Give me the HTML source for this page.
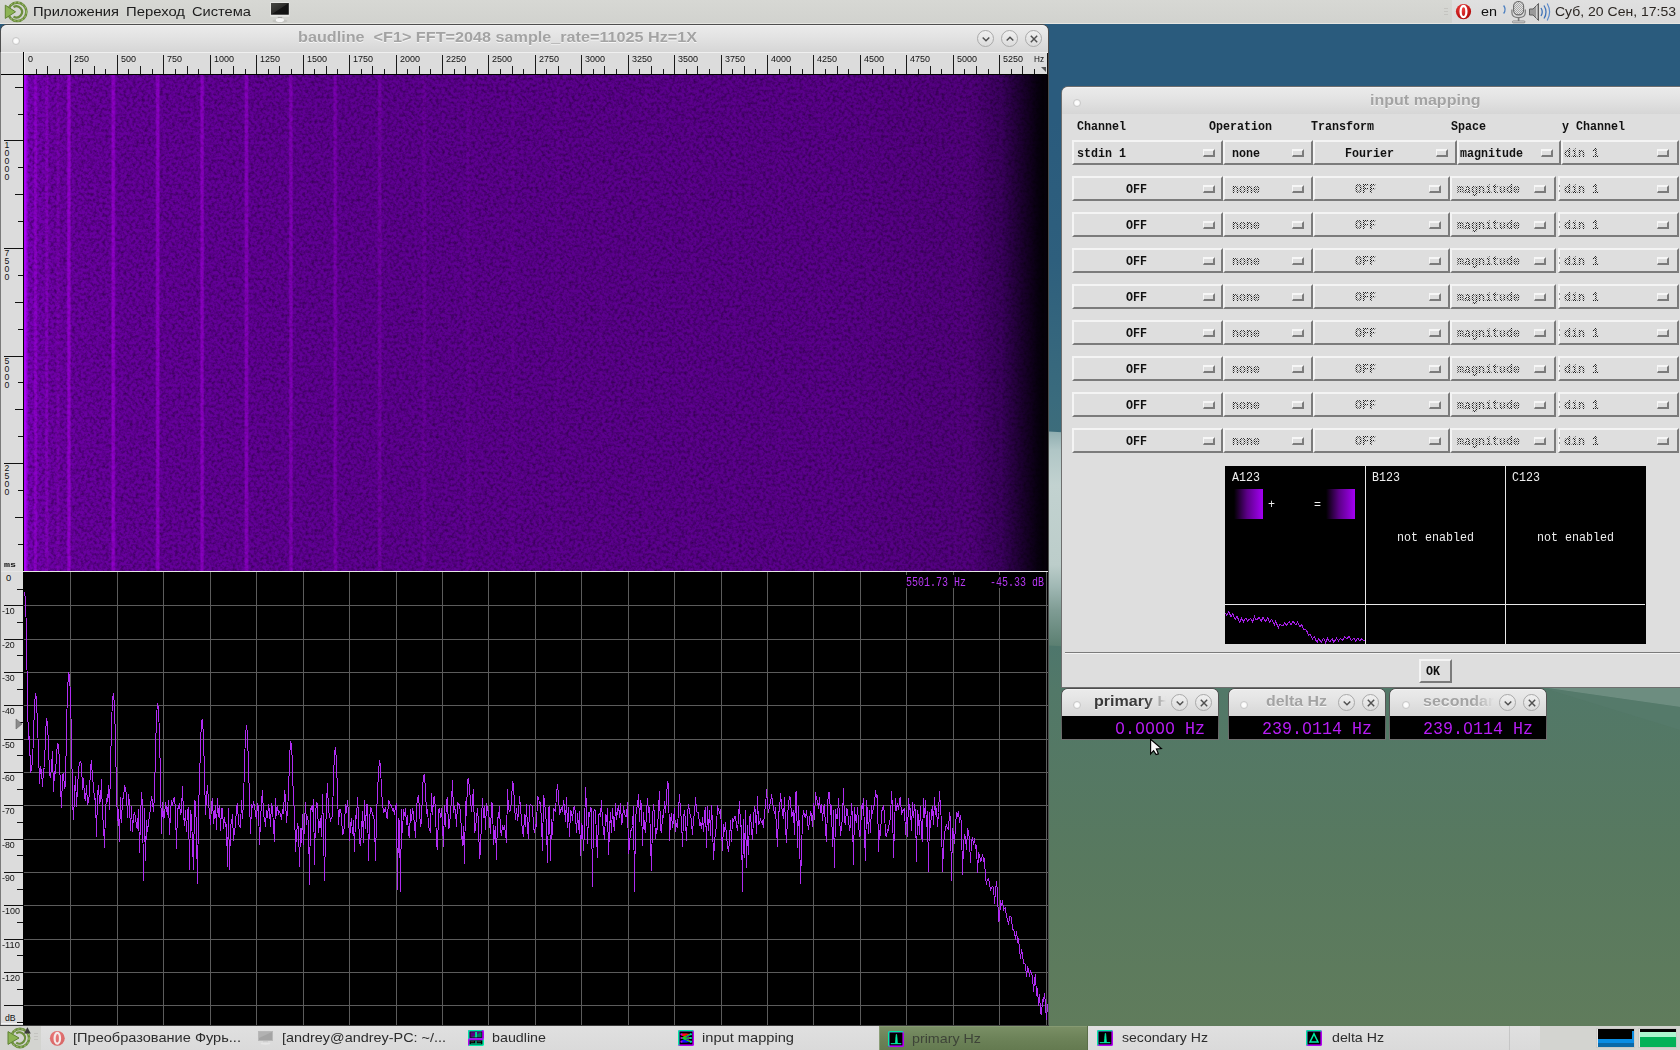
<!DOCTYPE html><html><head><meta charset="utf-8"><title>baudline</title><style>
*{box-sizing:border-box}
html,body{margin:0;padding:0;overflow:hidden}
body{width:1680px;height:1050px;overflow:hidden;position:relative;font-family:"Liberation Sans",sans-serif;font-size:13px;color:#222;
background:linear-gradient(180deg,#2a5b7d 0px,#2a5b7d 120px,#2e5f7d 260px,#3a6b7d 400px,#467374 560px,#527868 690px,#58795f 860px,#607c5c 1026px);}
.a{position:absolute}
.t{position:absolute;white-space:pre;line-height:1}
svg{position:absolute;overflow:visible}
.mono{font-family:"Liberation Mono",monospace}
.panel{background:#d5d6d2}
.tb{background:linear-gradient(180deg,#ebebeb 0%,#e4e4e4 40%,#d6d6d6 100%)}
.ttl{font-weight:700;color:#a3a3a3;text-shadow:0 1px 0 #f6f6f6}
.om{position:absolute;height:25px;background:#dedede;border-style:solid;border-width:2px;border-color:#f4f4f4 #7b7b7b #7b7b7b #f4f4f4}
.ind{position:absolute;width:12px;height:8px;top:7px;background:#dedede;border-style:solid;border-width:2px 2px 2px 1px;border-color:#f6f6f6 #7b7b7b #7b7b7b #f6f6f6}
.ot{position:absolute;top:4px;white-space:pre;font-family:"Liberation Mono",monospace;font-weight:700;font-size:11.67px;line-height:13px;color:#111}
.dis{color:#8e8e8e;font-weight:400}
.hd{position:absolute;white-space:pre;font-family:"Liberation Mono",monospace;font-weight:700;font-size:11.67px;line-height:13px;color:#111}
.cv{position:absolute;white-space:pre;font-family:"Liberation Mono",monospace;font-size:11.67px;line-height:13px;color:#f0f0f0}
.task{position:absolute;top:0;height:24px;white-space:pre;font-size:14px;line-height:24px;color:#2e2e2e;letter-spacing:.25px}
.wbtn{position:absolute;width:17px;height:17px;border-radius:50%;border:1px solid #a9a9a9;background:linear-gradient(180deg,#f0f0f0,#dcdcdc)}
.stp{position:absolute;left:0;top:0;width:1680px;height:700px;-webkit-mask-image:repeating-conic-gradient(#000 0 25%,transparent 0 50%);-webkit-mask-size:2px 2px;mask-image:repeating-conic-gradient(#000 0 25%,transparent 0 50%);mask-size:2px 2px}
.dot{position:absolute;width:8px;height:8px;border-radius:50%;background:radial-gradient(circle at 50% 50%,#fff 0,#fbfbfb 45%,#e4e4e4 100%);border:1px solid #c9c9c9}
</style></head><body>
<svg class="a" style="left:0;top:0" width="1680" height="1050">
<defs><linearGradient id="wb" x1="0" y1="0" x2="0" y2="1">
<stop offset="0" stop-color="#8fadb0"/><stop offset="0.09" stop-color="#b0c6c6"/><stop offset="0.25" stop-color="#c2d2d0"/>
<stop offset="0.62" stop-color="#bccdca"/><stop offset="0.72" stop-color="#a0b8b4"/><stop offset="0.83" stop-color="#7f9c94"/><stop offset="1" stop-color="#5a7e70"/></linearGradient></defs>
<polygon points="1040,431 1075,433 1075,647 1040,645" fill="url(#wb)"/>
<polygon points="1540,687 1680,687 1680,707" fill="#6d8d80"/>
<polygon points="1540,687 1680,707 1680,730 " fill="#587b6d" opacity=".5"/>
</svg>
<div class="a panel" style="left:0;top:0;width:1680px;height:24px;background:linear-gradient(180deg,#d7d8d4,#d1d2ce)"></div>
<div class="a" style="left:1452px;top:0;width:228px;height:24px;background:linear-gradient(180deg,#e0e0e0,#dadada)"></div>
<div class="a" style="left:0;top:23px;width:1680px;height:1px;background:#e6e6e2"></div>
<svg style="left:4px;top:0" width="26" height="24" viewBox="0 0 26 24">
<circle cx="13.2" cy="11.8" r="9.2" fill="none" stroke="#6b8d3c" stroke-width="2.6"/>
<circle cx="13.2" cy="11.8" r="9.2" fill="none" stroke="#a9c77a" stroke-width="1" stroke-dasharray="2 2"/>
<path d="M9.5 7 A5.6 5.6 0 1 1 9.5 16.6" fill="none" stroke="#6b8d3c" stroke-width="2.2"/>
<path d="M1.3 5.2 L11.5 11.8 L1.3 18.4 Z" fill="#8db454" stroke="#5f8233" stroke-width="1"/>
</svg>
<div class="t " style="left:33px;top:4.89px;font-size:13.13px;color:#1c1c1c;transform-origin:0 0;transform:scaleX(1.1197);">Приложения</div>
<div class="t " style="left:126px;top:4.89px;font-size:13.13px;color:#1c1c1c;transform-origin:0 0;transform:scaleX(1.1315);">Переход</div>
<div class="t " style="left:192px;top:4.89px;font-size:13.13px;color:#1c1c1c;transform-origin:0 0;transform:scaleX(1.1159);">Система</div>
<svg style="left:269px;top:0" width="22" height="24" viewBox="0 0 22 24">
<defs><linearGradient id="scr" x1="0" y1="0" x2="1" y2="1"><stop offset="0" stop-color="#484844"/><stop offset=".48" stop-color="#2e2e2c"/><stop offset=".52" stop-color="#141414"/><stop offset="1" stop-color="#101010"/></linearGradient></defs>
<ellipse cx="10.9" cy="21" rx="7.5" ry="1.8" fill="#bdbdb9" opacity=".7"/>
<rect x="1.2" y="1.9" width="19.3" height="14.8" rx=".8" fill="#e6e6e4"/>
<rect x="2" y="3" width="17.8" height="11.7" fill="url(#scr)"/>
<rect x="8.8" y="16.9" width="4.4" height="1.4" fill="#a9a9a7"/>
<ellipse cx="10.9" cy="20" rx="4.1" ry="2.1" fill="#f4f4f4"/>
</svg>
<svg style="left:1455px;top:3px" width="18" height="18" viewBox="0 0 18 18">
<defs><radialGradient id="op" cx=".4" cy=".3" r=".8"><stop offset="0" stop-color="#f04040"/><stop offset="1" stop-color="#a80000"/></radialGradient></defs>
<circle cx="8.5" cy="8.6" r="7.6" fill="url(#op)"/><ellipse cx="8.5" cy="8.6" rx="2.9" ry="5.6" fill="none" stroke="#fff" stroke-width="2.3"/></svg>
<div class="t " style="left:1481px;top:4.89px;font-size:13.13px;color:#111;transform-origin:0 0;transform:scaleX(1.0957);">en</div>
<svg style="left:1502px;top:0" width="26" height="24" viewBox="0 0 26 24">
<defs><pattern id="mp" width="2" height="2" patternUnits="userSpaceOnUse"><rect width="2" height="2" fill="#e2e2e2"/><rect width="1" height="1" fill="#a8a8a8"/><rect x="1" y="1" width="1" height="1" fill="#a8a8a8"/></pattern></defs>
<path d="M1.6 5.5 Q4.6 9.5 1.6 13.5" fill="none" stroke="#4a7ec0" stroke-width="1.3"/>
<rect x="11.6" y="1.5" width="10" height="13.4" rx="4.6" fill="url(#mp)" stroke="#6a6a6a" stroke-width="1.1"/>
<path d="M9.9 9.5 V12.5 Q9.9 17.6 16.6 17.6 Q23.3 17.6 23.3 12.5 V9.5" fill="none" stroke="#7a7a7a" stroke-width="1.2"/>
<path d="M16.6 17.6 V21.4" stroke="#7a7a7a" stroke-width="1.6" fill="none"/><rect x="10.5" y="21" width="12.4" height="1.8" rx=".8" fill="#e8e8e8" stroke="#7a7a7a" stroke-width=".8"/>
</svg>
<svg style="left:1528px;top:1px" width="24" height="22" viewBox="0 0 24 22">
<path d="M1.5 8 H5 L10.5 2.5 V19.5 L5 14 H1.5 Z" fill="#9a9a9a" stroke="#5e5e5e" stroke-width="1"/>
<path d="M8.7 4.5 V17.5" stroke="#dcdcdc" stroke-width="1"/>
<path d="M13 7 Q15.5 11 13 15" fill="none" stroke="#3f72b8" stroke-width="1.3"/>
<path d="M16 4.5 Q20 11 16 17.5" fill="none" stroke="#3f72b8" stroke-width="1.3"/>
<path d="M19.2 2.5 Q24 11 19.2 19.5" fill="none" stroke="#5b8acb" stroke-width="1.2"/>
</svg>
<div class="t " style="left:1555px;top:4.89px;font-size:13.13px;color:#2b2622;transform-origin:0 0;transform:scaleX(1.0667);">Суб, 20 Сен, 17:53</div>
<div class="a" style="left:1444px;top:8px;width:4px;height:1px;background:#c4c4c0;box-shadow:0 3px 0 #c4c4c0,0 6px 0 #c4c4c0"></div>
<div class="a" style="left:0;top:24px;width:1049px;height:1002px;background:#4e4e4e;border-radius:7px 7px 0 0"></div>
<div class="a tb" style="left:1px;top:25px;width:1047px;height:27px;border-radius:6px 6px 0 0;box-shadow:inset 0 1px 0 #f2f2f2"></div>
<div class="dot" style="left:12px;top:37px"></div>
<div class="t " style="left:298px;top:30.14px;font-size:14.25px;font-weight:700;color:#a3a3a3;transform-origin:0 0;transform:scaleX(1.1361);text-shadow:0 1px 0 #f6f6f6;">baudline  &lt;F1&gt; FFT=2048 sample_rate=11025 Hz=1X</div>
<div class="wbtn" style="left:977.0px;top:30.0px"></div><svg style="left:985.5px;top:38.5px" width="1" height="1"><path d="M-3.3 -1.6 L0 1.8 L3.3 -1.6" fill="none" stroke="#505050" stroke-width="1.45"/></svg><div class="wbtn" style="left:1001.0px;top:30.0px"></div><svg style="left:1009.5px;top:38.5px" width="1" height="1"><path d="M-3.3 1.6 L0 -1.8 L3.3 1.6" fill="none" stroke="#505050" stroke-width="1.45"/></svg><div class="wbtn" style="left:1025.0px;top:30.0px"></div><svg style="left:1033.5px;top:38.5px" width="1" height="1"><path d="M-3.2 -3.2 L3.2 3.2 M3.2 -3.2 L-3.2 3.2" fill="none" stroke="#505050" stroke-width="1.45"/></svg>
<div class="a" style="left:0;top:52px;width:1px;height:973px;background:#7a7a7a"></div>
<div class="a" style="left:1px;top:52px;width:1047px;height:23px;background:#dcdcdc"></div>
<div class="a" style="left:1px;top:52px;width:1047px;height:1px;background:#f0f0f0"></div><div class="a" style="left:24px;top:53px;width:1px;height:21px;background:#f0f0f0"></div>
<div class="a" style="left:1px;top:74px;width:1047px;height:1px;background:#000"></div>
<div class="a" style="left:23px;top:52px;width:1px;height:23px;background:#000"></div>
<div class="a" style="left:1047px;top:53px;width:1px;height:22px;background:#111"></div>
<svg style="left:0;top:0" width="1049" height="80" shape-rendering="crispEdges"><rect x="36" y="69" width="1" height="5" fill="#1a1a1a"/><rect x="47" y="66" width="1" height="8" fill="#1a1a1a"/><rect x="59" y="69" width="1" height="5" fill="#1a1a1a"/><rect x="70" y="55" width="1" height="19" fill="#1a1a1a"/><rect x="82" y="69" width="1" height="5" fill="#1a1a1a"/><rect x="94" y="66" width="1" height="8" fill="#1a1a1a"/><rect x="105" y="69" width="1" height="5" fill="#1a1a1a"/><rect x="117" y="55" width="1" height="19" fill="#1a1a1a"/><rect x="128" y="69" width="1" height="5" fill="#1a1a1a"/><rect x="140" y="66" width="1" height="8" fill="#1a1a1a"/><rect x="152" y="69" width="1" height="5" fill="#1a1a1a"/><rect x="163" y="55" width="1" height="19" fill="#1a1a1a"/><rect x="175" y="69" width="1" height="5" fill="#1a1a1a"/><rect x="187" y="66" width="1" height="8" fill="#1a1a1a"/><rect x="198" y="69" width="1" height="5" fill="#1a1a1a"/><rect x="210" y="55" width="1" height="19" fill="#1a1a1a"/><rect x="221" y="69" width="1" height="5" fill="#1a1a1a"/><rect x="233" y="66" width="1" height="8" fill="#1a1a1a"/><rect x="245" y="69" width="1" height="5" fill="#1a1a1a"/><rect x="256" y="55" width="1" height="19" fill="#1a1a1a"/><rect x="268" y="69" width="1" height="5" fill="#1a1a1a"/><rect x="279" y="66" width="1" height="8" fill="#1a1a1a"/><rect x="291" y="69" width="1" height="5" fill="#1a1a1a"/><rect x="303" y="55" width="1" height="19" fill="#1a1a1a"/><rect x="314" y="69" width="1" height="5" fill="#1a1a1a"/><rect x="326" y="66" width="1" height="8" fill="#1a1a1a"/><rect x="337" y="69" width="1" height="5" fill="#1a1a1a"/><rect x="349" y="55" width="1" height="19" fill="#1a1a1a"/><rect x="361" y="69" width="1" height="5" fill="#1a1a1a"/><rect x="372" y="66" width="1" height="8" fill="#1a1a1a"/><rect x="384" y="69" width="1" height="5" fill="#1a1a1a"/><rect x="396" y="55" width="1" height="19" fill="#1a1a1a"/><rect x="407" y="69" width="1" height="5" fill="#1a1a1a"/><rect x="419" y="66" width="1" height="8" fill="#1a1a1a"/><rect x="430" y="69" width="1" height="5" fill="#1a1a1a"/><rect x="442" y="55" width="1" height="19" fill="#1a1a1a"/><rect x="454" y="69" width="1" height="5" fill="#1a1a1a"/><rect x="465" y="66" width="1" height="8" fill="#1a1a1a"/><rect x="477" y="69" width="1" height="5" fill="#1a1a1a"/><rect x="488" y="55" width="1" height="19" fill="#1a1a1a"/><rect x="500" y="69" width="1" height="5" fill="#1a1a1a"/><rect x="512" y="66" width="1" height="8" fill="#1a1a1a"/><rect x="523" y="69" width="1" height="5" fill="#1a1a1a"/><rect x="535" y="55" width="1" height="19" fill="#1a1a1a"/><rect x="546" y="69" width="1" height="5" fill="#1a1a1a"/><rect x="558" y="66" width="1" height="8" fill="#1a1a1a"/><rect x="570" y="69" width="1" height="5" fill="#1a1a1a"/><rect x="581" y="55" width="1" height="19" fill="#1a1a1a"/><rect x="593" y="69" width="1" height="5" fill="#1a1a1a"/><rect x="604" y="66" width="1" height="8" fill="#1a1a1a"/><rect x="616" y="69" width="1" height="5" fill="#1a1a1a"/><rect x="628" y="55" width="1" height="19" fill="#1a1a1a"/><rect x="639" y="69" width="1" height="5" fill="#1a1a1a"/><rect x="651" y="66" width="1" height="8" fill="#1a1a1a"/><rect x="663" y="69" width="1" height="5" fill="#1a1a1a"/><rect x="674" y="55" width="1" height="19" fill="#1a1a1a"/><rect x="686" y="69" width="1" height="5" fill="#1a1a1a"/><rect x="697" y="66" width="1" height="8" fill="#1a1a1a"/><rect x="709" y="69" width="1" height="5" fill="#1a1a1a"/><rect x="721" y="55" width="1" height="19" fill="#1a1a1a"/><rect x="732" y="69" width="1" height="5" fill="#1a1a1a"/><rect x="744" y="66" width="1" height="8" fill="#1a1a1a"/><rect x="755" y="69" width="1" height="5" fill="#1a1a1a"/><rect x="767" y="55" width="1" height="19" fill="#1a1a1a"/><rect x="779" y="69" width="1" height="5" fill="#1a1a1a"/><rect x="790" y="66" width="1" height="8" fill="#1a1a1a"/><rect x="802" y="69" width="1" height="5" fill="#1a1a1a"/><rect x="813" y="55" width="1" height="19" fill="#1a1a1a"/><rect x="825" y="69" width="1" height="5" fill="#1a1a1a"/><rect x="837" y="66" width="1" height="8" fill="#1a1a1a"/><rect x="848" y="69" width="1" height="5" fill="#1a1a1a"/><rect x="860" y="55" width="1" height="19" fill="#1a1a1a"/><rect x="872" y="69" width="1" height="5" fill="#1a1a1a"/><rect x="883" y="66" width="1" height="8" fill="#1a1a1a"/><rect x="895" y="69" width="1" height="5" fill="#1a1a1a"/><rect x="906" y="55" width="1" height="19" fill="#1a1a1a"/><rect x="918" y="69" width="1" height="5" fill="#1a1a1a"/><rect x="930" y="66" width="1" height="8" fill="#1a1a1a"/><rect x="941" y="69" width="1" height="5" fill="#1a1a1a"/><rect x="953" y="55" width="1" height="19" fill="#1a1a1a"/><rect x="964" y="69" width="1" height="5" fill="#1a1a1a"/><rect x="976" y="66" width="1" height="8" fill="#1a1a1a"/><rect x="988" y="69" width="1" height="5" fill="#1a1a1a"/><rect x="999" y="55" width="1" height="19" fill="#1a1a1a"/><rect x="1011" y="69" width="1" height="5" fill="#1a1a1a"/><rect x="1022" y="66" width="1" height="8" fill="#1a1a1a"/><rect x="1034" y="69" width="1" height="5" fill="#1a1a1a"/><path d="M1041 67 L1046 67 L1046 72 Z" fill="#555" shape-rendering="auto"/></svg>
<div class="t " style="left:27.6px;top:55.52px;font-size:8.24px;color:#111;transform-origin:0 0;transform:scaleX(1.0910);">0</div>
<div class="t " style="left:73.6px;top:55.52px;font-size:8.24px;color:#111;transform-origin:0 0;transform:scaleX(1.0910);">250</div>
<div class="t " style="left:120.6px;top:55.52px;font-size:8.24px;color:#111;transform-origin:0 0;transform:scaleX(1.0910);">500</div>
<div class="t " style="left:166.6px;top:55.52px;font-size:8.24px;color:#111;transform-origin:0 0;transform:scaleX(1.0910);">750</div>
<div class="t " style="left:213.6px;top:55.52px;font-size:8.24px;color:#111;transform-origin:0 0;transform:scaleX(1.0910);">1000</div>
<div class="t " style="left:259.6px;top:55.52px;font-size:8.24px;color:#111;transform-origin:0 0;transform:scaleX(1.0910);">1250</div>
<div class="t " style="left:306.6px;top:55.52px;font-size:8.24px;color:#111;transform-origin:0 0;transform:scaleX(1.0910);">1500</div>
<div class="t " style="left:352.6px;top:55.52px;font-size:8.24px;color:#111;transform-origin:0 0;transform:scaleX(1.0910);">1750</div>
<div class="t " style="left:399.6px;top:55.52px;font-size:8.24px;color:#111;transform-origin:0 0;transform:scaleX(1.0910);">2000</div>
<div class="t " style="left:445.6px;top:55.52px;font-size:8.24px;color:#111;transform-origin:0 0;transform:scaleX(1.0910);">2250</div>
<div class="t " style="left:491.6px;top:55.52px;font-size:8.24px;color:#111;transform-origin:0 0;transform:scaleX(1.0910);">2500</div>
<div class="t " style="left:538.6px;top:55.52px;font-size:8.24px;color:#111;transform-origin:0 0;transform:scaleX(1.0910);">2750</div>
<div class="t " style="left:584.6px;top:55.52px;font-size:8.24px;color:#111;transform-origin:0 0;transform:scaleX(1.0910);">3000</div>
<div class="t " style="left:631.6px;top:55.52px;font-size:8.24px;color:#111;transform-origin:0 0;transform:scaleX(1.0910);">3250</div>
<div class="t " style="left:677.6px;top:55.52px;font-size:8.24px;color:#111;transform-origin:0 0;transform:scaleX(1.0910);">3500</div>
<div class="t " style="left:724.6px;top:55.52px;font-size:8.24px;color:#111;transform-origin:0 0;transform:scaleX(1.0910);">3750</div>
<div class="t " style="left:770.6px;top:55.52px;font-size:8.24px;color:#111;transform-origin:0 0;transform:scaleX(1.0910);">4000</div>
<div class="t " style="left:816.6px;top:55.52px;font-size:8.24px;color:#111;transform-origin:0 0;transform:scaleX(1.0910);">4250</div>
<div class="t " style="left:863.6px;top:55.52px;font-size:8.24px;color:#111;transform-origin:0 0;transform:scaleX(1.0910);">4500</div>
<div class="t " style="left:909.6px;top:55.52px;font-size:8.24px;color:#111;transform-origin:0 0;transform:scaleX(1.0910);">4750</div>
<div class="t " style="left:956.6px;top:55.52px;font-size:8.24px;color:#111;transform-origin:0 0;transform:scaleX(1.0910);">5000</div>
<div class="t " style="left:1002.6px;top:55.52px;font-size:8.24px;color:#111;transform-origin:0 0;transform:scaleX(1.0910);">5250</div>
<div class="t " style="left:1034px;top:55.52px;font-size:8.24px;color:#111;transform-origin:0 0;transform:scaleX(0.9930);">Hz</div>
<div class="a" style="left:1px;top:75px;width:22px;height:496px;background:#dcdcdc"></div>
<div class="a" style="left:23px;top:75px;width:1px;height:496px;background:#000"></div>
<svg style="left:0;top:0" width="24" height="1030" shape-rendering="crispEdges"><rect x="15" y="87" width="8" height="1" fill="#111"/><rect x="18" y="114" width="5" height="1" fill="#111"/><rect x="4" y="140" width="19" height="1" fill="#111"/><rect x="18" y="167" width="5" height="1" fill="#111"/><rect x="15" y="194" width="8" height="1" fill="#111"/><rect x="18" y="221" width="5" height="1" fill="#111"/><rect x="4" y="248" width="19" height="1" fill="#111"/><rect x="18" y="275" width="5" height="1" fill="#111"/><rect x="15" y="302" width="8" height="1" fill="#111"/><rect x="18" y="329" width="5" height="1" fill="#111"/><rect x="4" y="356" width="19" height="1" fill="#111"/><rect x="18" y="382" width="5" height="1" fill="#111"/><rect x="15" y="409" width="8" height="1" fill="#111"/><rect x="18" y="436" width="5" height="1" fill="#111"/><rect x="4" y="463" width="19" height="1" fill="#111"/><rect x="18" y="490" width="5" height="1" fill="#111"/><rect x="15" y="517" width="8" height="1" fill="#111"/><rect x="18" y="544" width="5" height="1" fill="#111"/></svg>
<div class="t " style="left:4.5px;top:141.37px;font-size:8.66px;color:#111;transform-origin:0 0;transform:scaleX(1.0000);">1</div>
<div class="t " style="left:4.5px;top:149.37px;font-size:8.66px;color:#111;transform-origin:0 0;transform:scaleX(1.0000);">0</div>
<div class="t " style="left:4.5px;top:157.37px;font-size:8.66px;color:#111;transform-origin:0 0;transform:scaleX(1.0000);">0</div>
<div class="t " style="left:4.5px;top:165.37px;font-size:8.66px;color:#111;transform-origin:0 0;transform:scaleX(1.0000);">0</div>
<div class="t " style="left:4.5px;top:173.37px;font-size:8.66px;color:#111;transform-origin:0 0;transform:scaleX(1.0000);">0</div>
<div class="t " style="left:4.5px;top:249.37px;font-size:8.66px;color:#111;transform-origin:0 0;transform:scaleX(1.0000);">7</div>
<div class="t " style="left:4.5px;top:257.37px;font-size:8.66px;color:#111;transform-origin:0 0;transform:scaleX(1.0000);">5</div>
<div class="t " style="left:4.5px;top:265.37px;font-size:8.66px;color:#111;transform-origin:0 0;transform:scaleX(1.0000);">0</div>
<div class="t " style="left:4.5px;top:273.37px;font-size:8.66px;color:#111;transform-origin:0 0;transform:scaleX(1.0000);">0</div>
<div class="t " style="left:4.5px;top:357.37px;font-size:8.66px;color:#111;transform-origin:0 0;transform:scaleX(1.0000);">5</div>
<div class="t " style="left:4.5px;top:365.37px;font-size:8.66px;color:#111;transform-origin:0 0;transform:scaleX(1.0000);">0</div>
<div class="t " style="left:4.5px;top:373.37px;font-size:8.66px;color:#111;transform-origin:0 0;transform:scaleX(1.0000);">0</div>
<div class="t " style="left:4.5px;top:381.37px;font-size:8.66px;color:#111;transform-origin:0 0;transform:scaleX(1.0000);">0</div>
<div class="t " style="left:4.5px;top:464.37px;font-size:8.66px;color:#111;transform-origin:0 0;transform:scaleX(1.0000);">2</div>
<div class="t " style="left:4.5px;top:472.37px;font-size:8.66px;color:#111;transform-origin:0 0;transform:scaleX(1.0000);">5</div>
<div class="t " style="left:4.5px;top:480.37px;font-size:8.66px;color:#111;transform-origin:0 0;transform:scaleX(1.0000);">0</div>
<div class="t " style="left:4.5px;top:488.37px;font-size:8.66px;color:#111;transform-origin:0 0;transform:scaleX(1.0000);">0</div>
<div class="t mono " style="left:4px;top:562.18px;font-size:7.59px;font-weight:700;color:#111;transform-origin:0 0;transform:scale(1.3180,1.0000);">ms</div>
<svg style="left:24px;top:75px" width="1024" height="496" viewBox="0 0 1024 496"><defs><linearGradient id="sg" x1="0" y1="0" x2="1" y2="0"><stop offset="0" stop-color="#7a00ba"/><stop offset="0.03" stop-color="#6c00a4"/><stop offset="0.1" stop-color="#66009c"/><stop offset="0.3" stop-color="#600094"/><stop offset="0.55" stop-color="#5c008e"/><stop offset="0.8" stop-color="#5a008b"/><stop offset="0.925" stop-color="#52007e"/><stop offset="0.955" stop-color="#3a005e"/><stop offset="0.975" stop-color="#1c0030"/><stop offset="0.99" stop-color="#080010"/><stop offset="1" stop-color="#000"/></linearGradient><linearGradient id="hl" x1="0" y1="0" x2="1" y2="0"><stop offset="0" stop-color="#c000ff" stop-opacity="0"/><stop offset="0.33" stop-color="#c000ff" stop-opacity="1"/><stop offset="0.67" stop-color="#c000ff" stop-opacity="1"/><stop offset="1" stop-color="#c000ff" stop-opacity="0"/></linearGradient><filter id="nz" x="0" y="0" width="100%" height="100%"><feTurbulence type="fractalNoise" baseFrequency="0.33" numOctaves="2" seed="7" result="n"/><feColorMatrix in="n" type="matrix" values="0 0 0 0 0  0 0 0 0 0  0 0 0 0 0  0.85 0 0 0 -0.325"/></filter></defs><rect width="1024" height="496" fill="url(#sg)"/><rect width="1024" height="496" filter="url(#nz)"/><rect x="42.3" y="0" width="5.2" height="496" fill="url(#hl)" opacity="0.440"/><rect x="86.7" y="0" width="5.2" height="496" fill="url(#hl)" opacity="0.420"/><rect x="131.1" y="0" width="5.2" height="496" fill="url(#hl)" opacity="0.400"/><rect x="175.5" y="0" width="5.2" height="496" fill="url(#hl)" opacity="0.380"/><rect x="219.9" y="0" width="5.2" height="496" fill="url(#hl)" opacity="0.350"/><rect x="264.3" y="0" width="5.2" height="496" fill="url(#hl)" opacity="0.300"/><rect x="308.7" y="0" width="5.2" height="496" fill="url(#hl)" opacity="0.250"/><rect x="353.1" y="0" width="5.2" height="496" fill="url(#hl)" opacity="0.180"/><rect x="397.5" y="0" width="5.2" height="496" fill="url(#hl)" opacity="0.100"/><rect x="441.9" y="0" width="5.2" height="496" fill="url(#hl)" opacity="0.060"/><rect x="486.3" y="0" width="5.2" height="496" fill="url(#hl)" opacity="0.045"/><rect x="530.7" y="0" width="5.2" height="496" fill="url(#hl)" opacity="0.035"/><rect x="575.1" y="0" width="5.2" height="496" fill="url(#hl)" opacity="0.020"/><rect x="619.5" y="0" width="5.2" height="496" fill="url(#hl)" opacity="0.020"/><rect x="663.9" y="0" width="5.2" height="496" fill="url(#hl)" opacity="0.020"/><rect x="708.3" y="0" width="5.2" height="496" fill="url(#hl)" opacity="0.020"/><rect x="752.7" y="0" width="5.2" height="496" fill="url(#hl)" opacity="0.020"/><rect x="797.1" y="0" width="5.2" height="496" fill="url(#hl)" opacity="0.020"/><rect x="841.5" y="0" width="5.2" height="496" fill="url(#hl)" opacity="0.020"/><rect x="885.9" y="0" width="5.2" height="496" fill="url(#hl)" opacity="0.020"/><rect x="930.3" y="0" width="5.2" height="496" fill="url(#hl)" opacity="0.020"/><rect x="974.7" y="0" width="5.2" height="496" fill="url(#hl)" opacity="0.020"/><rect x="1019.1" y="0" width="5.2" height="496" fill="url(#hl)" opacity="0.020"/><rect x="9.4" y="0" width="4.4" height="496" fill="url(#hl)" opacity="0.300"/><rect x="20.6" y="0" width="4.4" height="496" fill="url(#hl)" opacity="0.220"/><rect x="31.7" y="0" width="4.4" height="496" fill="url(#hl)" opacity="0.140"/><rect x="0" y="0" width="2.6" height="496" fill="#b000ff" opacity=".9"/><rect x="2.6" y="0" width="1.6" height="496" fill="#b000ff" opacity=".35"/></svg>
<div class="a" style="left:1px;top:571px;width:1047px;height:1px;background:#e6e6e6"></div>
<div class="a" style="left:1px;top:572px;width:22px;height:453px;background:#dcdcdc"></div>
<div class="a" style="left:23px;top:572px;width:1025px;height:453px;background:#000"></div>
<svg style="left:0;top:0" width="1049" height="1026" shape-rendering="crispEdges"><rect x="24" y="605" width="1024" height="1" fill="#5c5c5c"/><rect x="4" y="605" width="19" height="1" fill="#111"/><rect x="17" y="589" width="6" height="1" fill="#111"/><rect x="24" y="639" width="1024" height="1" fill="#5c5c5c"/><rect x="4" y="639" width="19" height="1" fill="#111"/><rect x="17" y="622" width="6" height="1" fill="#111"/><rect x="24" y="672" width="1024" height="1" fill="#5c5c5c"/><rect x="4" y="672" width="19" height="1" fill="#111"/><rect x="17" y="655" width="6" height="1" fill="#111"/><rect x="24" y="705" width="1024" height="1" fill="#5c5c5c"/><rect x="4" y="705" width="19" height="1" fill="#111"/><rect x="17" y="689" width="6" height="1" fill="#111"/><rect x="24" y="739" width="1024" height="1" fill="#5c5c5c"/><rect x="4" y="739" width="19" height="1" fill="#111"/><rect x="17" y="722" width="6" height="1" fill="#111"/><rect x="24" y="772" width="1024" height="1" fill="#5c5c5c"/><rect x="4" y="772" width="19" height="1" fill="#111"/><rect x="17" y="755" width="6" height="1" fill="#111"/><rect x="24" y="805" width="1024" height="1" fill="#5c5c5c"/><rect x="4" y="805" width="19" height="1" fill="#111"/><rect x="17" y="789" width="6" height="1" fill="#111"/><rect x="24" y="839" width="1024" height="1" fill="#5c5c5c"/><rect x="4" y="839" width="19" height="1" fill="#111"/><rect x="17" y="822" width="6" height="1" fill="#111"/><rect x="24" y="872" width="1024" height="1" fill="#5c5c5c"/><rect x="4" y="872" width="19" height="1" fill="#111"/><rect x="17" y="855" width="6" height="1" fill="#111"/><rect x="24" y="905" width="1024" height="1" fill="#5c5c5c"/><rect x="4" y="905" width="19" height="1" fill="#111"/><rect x="17" y="889" width="6" height="1" fill="#111"/><rect x="24" y="939" width="1024" height="1" fill="#5c5c5c"/><rect x="4" y="939" width="19" height="1" fill="#111"/><rect x="17" y="922" width="6" height="1" fill="#111"/><rect x="24" y="972" width="1024" height="1" fill="#5c5c5c"/><rect x="4" y="972" width="19" height="1" fill="#111"/><rect x="17" y="955" width="6" height="1" fill="#111"/><rect x="24" y="1005" width="1024" height="1" fill="#5c5c5c"/><rect x="4" y="1005" width="19" height="1" fill="#111"/><rect x="17" y="989" width="6" height="1" fill="#111"/><rect x="17" y="1022" width="6" height="1" fill="#111"/><rect x="17" y="1022" width="5" height="1" fill="#111"/><rect x="1" y="1023" width="22" height="1" fill="#f2f2f2"/><rect x="70" y="572" width="1" height="453" fill="#5c5c5c"/><rect x="117" y="572" width="1" height="453" fill="#5c5c5c"/><rect x="163" y="572" width="1" height="453" fill="#5c5c5c"/><rect x="210" y="572" width="1" height="453" fill="#5c5c5c"/><rect x="256" y="572" width="1" height="453" fill="#5c5c5c"/><rect x="303" y="572" width="1" height="453" fill="#5c5c5c"/><rect x="349" y="572" width="1" height="453" fill="#5c5c5c"/><rect x="396" y="572" width="1" height="453" fill="#5c5c5c"/><rect x="442" y="572" width="1" height="453" fill="#5c5c5c"/><rect x="488" y="572" width="1" height="453" fill="#5c5c5c"/><rect x="535" y="572" width="1" height="453" fill="#5c5c5c"/><rect x="581" y="572" width="1" height="453" fill="#5c5c5c"/><rect x="628" y="572" width="1" height="453" fill="#5c5c5c"/><rect x="674" y="572" width="1" height="453" fill="#5c5c5c"/><rect x="721" y="572" width="1" height="453" fill="#5c5c5c"/><rect x="767" y="572" width="1" height="453" fill="#5c5c5c"/><rect x="813" y="572" width="1" height="453" fill="#5c5c5c"/><rect x="860" y="572" width="1" height="453" fill="#5c5c5c"/><rect x="906" y="572" width="1" height="453" fill="#5c5c5c"/><rect x="953" y="572" width="1" height="453" fill="#5c5c5c"/><rect x="999" y="572" width="1" height="453" fill="#5c5c5c"/><rect x="1046" y="572" width="1" height="453" fill="#5c5c5c"/><path d="M16 719 L22 724 L16 729 Z" fill="#8a8a8a" stroke="#666" stroke-width=".6" shape-rendering="auto"/></svg>
<div class="t " style="left:6px;top:573.78px;font-size:9.36px;color:#111;transform-origin:0 0;transform:scaleX(1.0000);">0</div>
<div class="t " style="left:2.0px;top:606.78px;font-size:9.36px;color:#111;transform-origin:0 0;transform:scaleX(0.9464);">-10</div>
<div class="t " style="left:2.0px;top:640.78px;font-size:9.36px;color:#111;transform-origin:0 0;transform:scaleX(0.9464);">-20</div>
<div class="t " style="left:2.0px;top:673.78px;font-size:9.36px;color:#111;transform-origin:0 0;transform:scaleX(0.9464);">-30</div>
<div class="t " style="left:2.0px;top:706.78px;font-size:9.36px;color:#111;transform-origin:0 0;transform:scaleX(0.9464);">-40</div>
<div class="t " style="left:2.0px;top:740.78px;font-size:9.36px;color:#111;transform-origin:0 0;transform:scaleX(0.9464);">-50</div>
<div class="t " style="left:2.0px;top:773.78px;font-size:9.36px;color:#111;transform-origin:0 0;transform:scaleX(0.9464);">-60</div>
<div class="t " style="left:2.0px;top:806.78px;font-size:9.36px;color:#111;transform-origin:0 0;transform:scaleX(0.9464);">-70</div>
<div class="t " style="left:2.0px;top:840.78px;font-size:9.36px;color:#111;transform-origin:0 0;transform:scaleX(0.9464);">-80</div>
<div class="t " style="left:2.0px;top:873.78px;font-size:9.36px;color:#111;transform-origin:0 0;transform:scaleX(0.9464);">-90</div>
<div class="t " style="left:2.0px;top:906.78px;font-size:9.36px;color:#111;transform-origin:0 0;transform:scaleX(0.9611);">-100</div>
<div class="t " style="left:2.0px;top:940.78px;font-size:9.36px;color:#111;transform-origin:0 0;transform:scaleX(0.9981);">-110</div>
<div class="t " style="left:2.0px;top:973.78px;font-size:9.36px;color:#111;transform-origin:0 0;transform:scaleX(0.9611);">-120</div>
<div class="t " style="left:5px;top:1013.87px;font-size:8.66px;color:#111;transform-origin:0 0;transform:scaleX(1.0000);">dB</div>
<svg style="left:0;top:0" width="1049" height="1026"><path d="M24.5 592.4 L25.5 600.1 L26.5 633.7 L27.5 703.7 L28.5 739.2 L29.5 737.3 L30.5 772.9 L31.5 768.7 L32.5 761.3 L33.5 736.3 L34.5 705.0 L35.5 692.6 L36.5 699.7 L37.5 726.3 L38.5 750.2 L39.5 783.6 L40.5 766.1 L41.5 771.3 L42.5 786.8 L43.5 769.4 L44.5 767.5 L45.5 733.6 L46.5 718.3 L47.5 722.9 L48.5 746.7 L49.5 772.6 L50.5 778.4 L51.5 766.1 L52.5 751.4 L53.5 791.9 L54.5 770.9 L55.5 774.4 L56.5 755.0 L57.5 743.6 L58.5 744.4 L59.5 763.6 L60.5 785.4 L61.5 807.6 L62.5 776.0 L63.5 772.8 L64.5 788.0 L65.5 786.4 L66.5 728.3 L67.5 690.9 L68.5 673.0 L69.5 675.0 L70.5 697.0 L71.5 738.0 L72.5 798.9 L73.5 820.3 L74.5 794.5 L75.5 775.8 L76.5 806.5 L77.5 788.8 L78.5 769.3 L79.5 763.2 L80.5 761.8 L81.5 763.7 L82.5 790.2 L83.5 777.8 L84.5 797.0 L85.5 801.4 L86.5 785.0 L87.5 804.6 L88.5 801.2 L89.5 793.2 L90.5 768.1 L91.5 760.5 L92.5 778.0 L93.5 785.0 L94.5 800.3 L95.5 797.7 L96.5 837.3 L97.5 794.7 L98.5 784.8 L99.5 804.0 L100.5 800.7 L101.5 779.3 L102.5 817.4 L103.5 822.9 L104.5 848.3 L105.5 810.9 L106.5 798.3 L107.5 802.2 L108.5 785.5 L109.5 809.7 L110.5 768.9 L111.5 724.5 L112.5 698.8 L113.5 692.8 L114.5 706.9 L115.5 740.8 L116.5 792.2 L117.5 820.5 L118.5 809.3 L119.5 842.1 L120.5 797.0 L121.5 823.1 L122.5 798.5 L123.5 798.6 L124.5 785.2 L125.5 789.2 L126.5 794.4 L127.5 817.7 L128.5 794.3 L129.5 803.1 L130.5 831.3 L131.5 806.4 L132.5 831.8 L133.5 815.5 L134.5 813.5 L135.5 816.2 L136.5 827.9 L137.5 828.4 L138.5 809.2 L139.5 852.5 L140.5 818.7 L141.5 792.2 L142.5 805.4 L143.5 880.8 L144.5 808.4 L145.5 861.0 L146.5 820.1 L147.5 832.3 L148.5 821.9 L149.5 817.2 L150.5 806.4 L151.5 796.0 L152.5 801.7 L153.5 811.5 L154.5 794.7 L155.5 750.4 L156.5 716.7 L157.5 702.8 L158.5 708.8 L159.5 734.9 L160.5 780.1 L161.5 834.3 L162.5 801.6 L163.5 819.4 L164.5 816.0 L165.5 802.5 L166.5 808.5 L167.5 814.5 L168.5 799.8 L169.5 835.3 L170.5 811.5 L171.5 800.4 L172.5 806.4 L173.5 798.4 L174.5 797.4 L175.5 810.1 L176.5 849.0 L177.5 808.2 L178.5 808.0 L179.5 803.0 L180.5 814.7 L181.5 811.0 L182.5 786.1 L183.5 814.3 L184.5 826.0 L185.5 809.9 L186.5 831.5 L187.5 810.3 L188.5 807.2 L189.5 869.5 L190.5 810.5 L191.5 818.2 L192.5 843.4 L193.5 870.3 L194.5 800.5 L195.5 801.5 L196.5 831.8 L197.5 883.8 L198.5 806.9 L199.5 783.5 L200.5 743.3 L201.5 721.6 L202.5 719.7 L203.5 737.8 L204.5 774.2 L205.5 814.5 L206.5 796.7 L207.5 785.3 L208.5 802.5 L209.5 813.4 L210.5 825.2 L211.5 804.8 L212.5 797.7 L213.5 823.8 L214.5 814.5 L215.5 804.9 L216.5 830.3 L217.5 797.6 L218.5 816.8 L219.5 804.9 L220.5 830.7 L221.5 809.0 L222.5 808.7 L223.5 828.7 L224.5 817.4 L225.5 825.9 L226.5 824.8 L227.5 867.4 L228.5 808.4 L229.5 869.6 L230.5 824.7 L231.5 823.4 L232.5 814.5 L233.5 841.0 L234.5 829.4 L235.5 826.1 L236.5 806.0 L237.5 803.6 L238.5 823.3 L239.5 826.2 L240.5 827.2 L241.5 800.1 L242.5 818.6 L243.5 802.7 L244.5 763.3 L245.5 734.9 L246.5 725.1 L247.5 735.2 L248.5 765.1 L249.5 799.4 L250.5 833.5 L251.5 805.3 L252.5 806.9 L253.5 802.6 L254.5 804.7 L255.5 815.3 L256.5 819.1 L257.5 804.3 L258.5 806.1 L259.5 845.3 L260.5 819.6 L261.5 803.3 L262.5 789.7 L263.5 815.5 L264.5 817.8 L265.5 826.6 L266.5 810.4 L267.5 817.8 L268.5 804.0 L269.5 812.2 L270.5 826.5 L271.5 802.7 L272.5 809.7 L273.5 824.7 L274.5 842.0 L275.5 798.1 L276.5 816.0 L277.5 806.0 L278.5 814.1 L279.5 812.0 L280.5 814.1 L281.5 820.4 L282.5 808.6 L283.5 813.9 L284.5 790.3 L285.5 797.9 L286.5 822.7 L287.5 809.9 L288.5 793.3 L289.5 759.0 L290.5 741.5 L291.5 743.7 L292.5 765.7 L293.5 805.0 L294.5 807.4 L295.5 851.7 L296.5 833.7 L297.5 824.8 L298.5 827.2 L299.5 867.0 L300.5 827.9 L301.5 843.1 L302.5 814.5 L303.5 845.0 L304.5 824.0 L305.5 802.0 L306.5 824.9 L307.5 815.9 L308.5 823.5 L309.5 885.2 L310.5 809.7 L311.5 807.2 L312.5 811.6 L313.5 798.9 L314.5 864.6 L315.5 814.0 L316.5 802.6 L317.5 804.5 L318.5 833.0 L319.5 823.8 L320.5 817.6 L321.5 837.3 L322.5 793.7 L323.5 831.3 L324.5 880.6 L325.5 836.6 L326.5 802.9 L327.5 782.9 L328.5 812.0 L329.5 814.7 L330.5 820.7 L331.5 818.2 L332.5 816.1 L333.5 778.3 L334.5 753.0 L335.5 747.4 L336.5 761.6 L337.5 793.4 L338.5 825.3 L339.5 809.6 L340.5 809.3 L341.5 817.1 L342.5 834.4 L343.5 833.7 L344.5 824.4 L345.5 804.3 L346.5 813.3 L347.5 799.8 L348.5 813.5 L349.5 841.3 L350.5 825.9 L351.5 818.3 L352.5 833.9 L353.5 820.4 L354.5 851.7 L355.5 814.8 L356.5 819.4 L357.5 796.9 L358.5 816.8 L359.5 840.7 L360.5 846.3 L361.5 830.7 L362.5 811.4 L363.5 842.6 L364.5 800.5 L365.5 828.5 L366.5 805.0 L367.5 804.2 L368.5 860.6 L369.5 820.1 L370.5 808.0 L371.5 808.9 L372.5 815.0 L373.5 815.6 L374.5 822.6 L375.5 861.3 L376.5 816.4 L377.5 792.6 L378.5 771.5 L379.5 760.3 L380.5 766.4 L381.5 790.0 L382.5 803.5 L383.5 812.4 L384.5 810.9 L385.5 807.5 L386.5 816.0 L387.5 819.3 L388.5 799.9 L389.5 802.7 L390.5 805.3 L391.5 805.4 L392.5 810.1 L393.5 808.9 L394.5 815.3 L395.5 805.9 L396.5 804.2 L397.5 890.3 L398.5 817.7 L399.5 822.5 L400.5 891.5 L401.5 809.5 L402.5 832.6 L403.5 808.8 L404.5 816.0 L405.5 808.4 L406.5 824.6 L407.5 815.4 L408.5 834.9 L409.5 837.7 L410.5 808.7 L411.5 821.0 L412.5 807.9 L413.5 815.0 L414.5 824.1 L415.5 837.5 L416.5 806.6 L417.5 799.9 L418.5 795.2 L419.5 810.4 L420.5 826.8 L421.5 822.1 L422.5 788.8 L423.5 776.3 L424.5 774.9 L425.5 790.1 L426.5 814.0 L427.5 808.6 L428.5 825.8 L429.5 829.2 L430.5 832.8 L431.5 793.5 L432.5 815.3 L433.5 799.0 L434.5 795.8 L435.5 810.9 L436.5 843.8 L437.5 849.6 L438.5 810.9 L439.5 808.2 L440.5 817.6 L441.5 808.1 L442.5 825.2 L443.5 846.7 L444.5 805.4 L445.5 826.8 L446.5 799.6 L447.5 798.2 L448.5 828.9 L449.5 826.5 L450.5 811.1 L451.5 801.5 L452.5 780.5 L453.5 813.4 L454.5 806.4 L455.5 810.7 L456.5 827.3 L457.5 802.0 L458.5 804.2 L459.5 804.1 L460.5 814.1 L461.5 831.1 L462.5 845.9 L463.5 826.3 L464.5 863.7 L465.5 801.2 L466.5 815.9 L467.5 779.5 L468.5 778.6 L469.5 789.8 L470.5 800.0 L471.5 812.1 L472.5 799.6 L473.5 789.5 L474.5 832.9 L475.5 828.9 L476.5 817.7 L477.5 808.0 L478.5 823.0 L479.5 859.2 L480.5 850.4 L481.5 818.2 L482.5 798.5 L483.5 817.8 L484.5 805.7 L485.5 829.5 L486.5 803.1 L487.5 808.8 L488.5 812.0 L489.5 822.1 L490.5 834.0 L491.5 802.7 L492.5 803.8 L493.5 844.8 L494.5 833.6 L495.5 826.4 L496.5 859.5 L497.5 818.0 L498.5 817.0 L499.5 806.3 L500.5 830.4 L501.5 835.8 L502.5 825.0 L503.5 828.6 L504.5 826.6 L505.5 832.6 L506.5 842.5 L507.5 789.3 L508.5 809.0 L509.5 811.2 L510.5 809.6 L511.5 799.7 L512.5 782.3 L513.5 784.1 L514.5 805.1 L515.5 820.0 L516.5 807.8 L517.5 820.6 L518.5 813.8 L519.5 795.9 L520.5 808.1 L521.5 820.1 L522.5 831.6 L523.5 836.6 L524.5 814.4 L525.5 826.7 L526.5 803.6 L527.5 829.4 L528.5 839.1 L529.5 805.6 L530.5 804.4 L531.5 806.0 L532.5 806.1 L533.5 827.0 L534.5 832.7 L535.5 824.9 L536.5 827.2 L537.5 796.5 L538.5 797.2 L539.5 803.6 L540.5 802.4 L541.5 822.9 L542.5 851.1 L543.5 795.2 L544.5 801.4 L545.5 812.0 L546.5 826.4 L547.5 863.3 L548.5 809.0 L549.5 805.9 L550.5 861.4 L551.5 818.7 L552.5 834.9 L553.5 808.8 L554.5 809.7 L555.5 811.0 L556.5 794.3 L557.5 784.5 L558.5 795.0 L559.5 814.6 L560.5 811.3 L561.5 806.9 L562.5 812.4 L563.5 800.0 L564.5 807.7 L565.5 822.4 L566.5 797.5 L567.5 827.8 L568.5 807.4 L569.5 837.1 L570.5 810.5 L571.5 812.0 L572.5 820.6 L573.5 807.2 L574.5 806.7 L575.5 813.8 L576.5 833.3 L577.5 813.2 L578.5 830.2 L579.5 811.2 L580.5 856.0 L581.5 822.6 L582.5 828.0 L583.5 850.7 L584.5 829.2 L585.5 787.2 L586.5 807.8 L587.5 844.4 L588.5 812.2 L589.5 817.1 L590.5 806.8 L591.5 809.9 L592.5 886.5 L593.5 812.9 L594.5 809.5 L595.5 811.2 L596.5 837.1 L597.5 857.7 L598.5 814.1 L599.5 813.7 L600.5 815.7 L601.5 800.4 L602.5 822.9 L603.5 828.7 L604.5 840.3 L605.5 813.9 L606.5 821.8 L607.5 807.7 L608.5 855.4 L609.5 830.6 L610.5 812.2 L611.5 832.5 L612.5 807.6 L613.5 823.7 L614.5 830.7 L615.5 803.5 L616.5 819.8 L617.5 810.3 L618.5 805.2 L619.5 817.5 L620.5 803.5 L621.5 824.8 L622.5 820.9 L623.5 805.6 L624.5 813.7 L625.5 816.2 L626.5 816.0 L627.5 802.2 L628.5 854.0 L629.5 846.5 L630.5 830.6 L631.5 830.5 L632.5 825.5 L633.5 806.0 L634.5 892.3 L635.5 819.9 L636.5 809.2 L637.5 805.5 L638.5 794.5 L639.5 821.6 L640.5 799.8 L641.5 805.7 L642.5 846.3 L643.5 812.1 L644.5 826.7 L645.5 832.6 L646.5 812.4 L647.5 798.2 L648.5 813.2 L649.5 806.7 L650.5 839.0 L651.5 871.4 L652.5 818.3 L653.5 803.8 L654.5 815.2 L655.5 839.0 L656.5 828.6 L657.5 829.6 L658.5 809.8 L659.5 791.2 L660.5 829.2 L661.5 833.4 L662.5 814.8 L663.5 818.0 L664.5 801.2 L665.5 812.8 L666.5 798.4 L667.5 780.7 L668.5 785.4 L669.5 841.1 L670.5 820.4 L671.5 813.1 L672.5 827.8 L673.5 819.9 L674.5 807.6 L675.5 832.1 L676.5 823.1 L677.5 828.4 L678.5 809.5 L679.5 794.0 L680.5 811.8 L681.5 819.3 L682.5 846.9 L683.5 817.2 L684.5 810.3 L685.5 821.2 L686.5 840.5 L687.5 813.3 L688.5 804.3 L689.5 812.0 L690.5 815.2 L691.5 821.4 L692.5 835.4 L693.5 817.5 L694.5 814.9 L695.5 797.4 L696.5 810.2 L697.5 813.0 L698.5 812.8 L699.5 825.1 L700.5 822.9 L701.5 829.3 L702.5 817.2 L703.5 832.4 L704.5 813.6 L705.5 806.6 L706.5 847.6 L707.5 805.8 L708.5 831.0 L709.5 810.0 L710.5 835.7 L711.5 804.7 L712.5 824.9 L713.5 859.5 L714.5 844.2 L715.5 831.1 L716.5 827.1 L717.5 805.1 L718.5 810.2 L719.5 812.5 L720.5 808.9 L721.5 829.5 L722.5 851.1 L723.5 823.9 L724.5 832.0 L725.5 822.4 L726.5 836.8 L727.5 844.8 L728.5 852.2 L729.5 840.8 L730.5 820.1 L731.5 841.9 L732.5 818.0 L733.5 820.8 L734.5 816.7 L735.5 816.9 L736.5 825.5 L737.5 830.8 L738.5 818.4 L739.5 800.8 L740.5 826.4 L741.5 825.9 L742.5 892.3 L743.5 819.3 L744.5 857.6 L745.5 810.3 L746.5 868.4 L747.5 824.9 L748.5 854.9 L749.5 817.4 L750.5 814.3 L751.5 829.8 L752.5 839.6 L753.5 818.1 L754.5 806.5 L755.5 812.2 L756.5 834.0 L757.5 796.5 L758.5 824.9 L759.5 822.6 L760.5 819.3 L761.5 822.1 L762.5 820.9 L763.5 828.4 L764.5 809.6 L765.5 808.1 L766.5 789.3 L767.5 804.5 L768.5 812.8 L769.5 805.0 L770.5 803.5 L771.5 794.1 L772.5 801.2 L773.5 808.3 L774.5 814.4 L775.5 807.5 L776.5 830.1 L777.5 846.5 L778.5 812.2 L779.5 810.6 L780.5 793.3 L781.5 803.8 L782.5 813.8 L783.5 818.6 L784.5 797.5 L785.5 826.0 L786.5 843.4 L787.5 815.6 L788.5 804.0 L789.5 797.1 L790.5 798.0 L791.5 816.9 L792.5 814.2 L793.5 810.5 L794.5 834.5 L795.5 793.0 L796.5 791.9 L797.5 847.9 L798.5 806.2 L799.5 833.0 L800.5 884.4 L801.5 848.6 L802.5 820.7 L803.5 810.2 L804.5 816.2 L805.5 817.4 L806.5 810.5 L807.5 820.6 L808.5 830.3 L809.5 820.8 L810.5 812.0 L811.5 814.2 L812.5 827.4 L813.5 803.2 L814.5 819.7 L815.5 792.4 L816.5 799.4 L817.5 800.6 L818.5 808.8 L819.5 797.2 L820.5 813.0 L821.5 804.3 L822.5 821.2 L823.5 807.7 L824.5 803.9 L825.5 829.8 L826.5 842.0 L827.5 806.3 L828.5 792.8 L829.5 792.9 L830.5 814.5 L831.5 805.5 L832.5 847.2 L833.5 810.5 L834.5 868.2 L835.5 809.3 L836.5 818.1 L837.5 818.7 L838.5 798.2 L839.5 816.3 L840.5 835.5 L841.5 826.4 L842.5 818.3 L843.5 788.1 L844.5 821.8 L845.5 824.5 L846.5 807.8 L847.5 810.5 L848.5 820.6 L849.5 829.9 L850.5 828.5 L851.5 803.4 L852.5 818.4 L853.5 865.1 L854.5 806.6 L855.5 819.9 L856.5 822.5 L857.5 807.0 L858.5 823.0 L859.5 836.3 L860.5 834.9 L861.5 805.1 L862.5 808.8 L863.5 798.3 L864.5 834.1 L865.5 860.6 L866.5 800.5 L867.5 812.9 L868.5 834.2 L869.5 810.1 L870.5 833.1 L871.5 805.3 L872.5 814.2 L873.5 806.1 L874.5 804.8 L875.5 790.1 L876.5 798.1 L877.5 795.4 L878.5 851.6 L879.5 829.9 L880.5 835.5 L881.5 812.9 L882.5 808.3 L883.5 806.3 L884.5 813.1 L885.5 833.6 L886.5 837.3 L887.5 829.6 L888.5 830.1 L889.5 820.3 L890.5 819.1 L891.5 790.8 L892.5 807.6 L893.5 858.1 L894.5 825.9 L895.5 798.2 L896.5 810.8 L897.5 802.7 L898.5 810.1 L899.5 799.5 L900.5 797.6 L901.5 815.3 L902.5 810.6 L903.5 810.3 L904.5 807.6 L905.5 835.3 L906.5 810.3 L907.5 836.7 L908.5 798.0 L909.5 809.2 L910.5 808.8 L911.5 830.8 L912.5 802.1 L913.5 818.3 L914.5 804.1 L915.5 814.3 L916.5 862.2 L917.5 810.5 L918.5 816.5 L919.5 834.7 L920.5 805.9 L921.5 835.8 L922.5 841.5 L923.5 797.6 L924.5 817.5 L925.5 800.2 L926.5 827.4 L927.5 811.2 L928.5 871.9 L929.5 811.7 L930.5 827.9 L931.5 812.2 L932.5 806.1 L933.5 824.7 L934.5 797.4 L935.5 814.6 L936.5 807.6 L937.5 826.6 L938.5 812.5 L939.5 791.5 L940.5 808.2 L941.5 822.4 L942.5 872.2 L943.5 846.6 L944.5 834.8 L945.5 827.3 L946.5 825.3 L947.5 827.8 L948.5 830.2 L949.5 812.0 L950.5 819.0 L951.5 881.1 L952.5 827.8 L953.5 834.6 L954.5 843.9 L955.5 825.0 L956.5 813.1 L957.5 815.3 L958.5 810.7 L959.5 823.4 L960.5 814.6 L961.5 825.2 L962.5 875.1 L963.5 845.0 L964.5 834.4 L965.5 838.4 L966.5 850.1 L967.5 828.0 L968.5 832.0 L969.5 840.5 L970.5 863.2 L971.5 840.5 L972.5 836.8 L973.5 844.8 L974.5 837.9 L975.5 848.7 L976.5 845.2 L977.5 873.0 L978.5 853.3 L979.5 855.1 L980.5 861.2 L981.5 860.5 L982.5 854.1 L983.5 860.6 L984.5 859.0 L985.5 878.8 L986.5 882.9 L987.5 879.6 L988.5 878.8 L989.5 882.5 L990.5 891.2 L991.5 887.2 L992.5 886.3 L993.5 887.2 L994.5 903.6 L995.5 890.2 L996.5 881.5 L997.5 891.9 L998.5 921.2 L999.5 920.0 L1000.5 900.2 L1001.5 906.3 L1002.5 900.2 L1003.5 910.3 L1004.5 908.1 L1005.5 908.0 L1006.5 917.4 L1007.5 919.0 L1008.5 924.7 L1009.5 917.0 L1010.5 916.2 L1011.5 917.4 L1012.5 929.4 L1013.5 930.0 L1014.5 931.6 L1015.5 939.6 L1016.5 930.6 L1017.5 941.6 L1018.5 939.4 L1019.5 949.1 L1020.5 959.2 L1021.5 949.0 L1022.5 954.2 L1023.5 963.5 L1024.5 963.1 L1025.5 964.5 L1026.5 976.6 L1027.5 966.9 L1028.5 969.1 L1029.5 977.0 L1030.5 969.9 L1031.5 974.5 L1032.5 976.0 L1033.5 992.0 L1034.5 981.0 L1035.5 973.9 L1036.5 996.4 L1037.5 988.0 L1038.5 1005.6 L1039.5 994.4 L1040.5 1011.8 L1041.5 1015.4 L1042.5 999.3 L1043.5 1002.2 L1044.5 992.9 L1045.5 1004.6 L1046.5 1020.0 L1047.5 1003.8" fill="none" stroke="#b02cf2" stroke-width="1" stroke-linejoin="miter" shape-rendering="crispEdges"/></svg>
<div class="a" style="left:905px;top:575px;width:62px;height:13px;background:#000"></div><div class="a" style="left:989px;top:575px;width:57px;height:13px;background:#000"></div>
<div class="t mono " style="left:905.5px;top:574.73px;font-size:11.61px;color:#b838f4;transform-origin:0 0;transform:scale(0.8614,1.1765);">5501.73 Hz</div>
<div class="t mono " style="left:989.5px;top:574.73px;font-size:11.61px;color:#b838f4;transform-origin:0 0;transform:scale(0.8614,1.1765);">-45.33 dB</div>
<div class="a" style="left:1061px;top:86px;width:619px;height:602px;background:#6e6e6e;border-radius:7px 0 0 0"></div>
<div class="a tb" style="left:1062px;top:87px;width:618px;height:27px;border-radius:6px 0 0 0;box-shadow:inset 0 1px 0 #f2f2f2"></div>
<div class="a" style="left:1062px;top:114px;width:618px;height:573px;background:#dedede"></div>
<div class="dot" style="left:1073px;top:99px"></div>
<div class="t " style="left:1370px;top:92.64px;font-size:14.25px;font-weight:700;color:#a3a3a3;transform-origin:0 0;transform:scaleX(1.1262);text-shadow:0 1px 0 #f6f6f6;">input mapping</div>
<div class="t mono " style="left:1077.3px;top:119.53px;font-size:12.29px;font-weight:700;color:#111;transform-origin:0 0;transform:scale(0.9492,1.1111);">Channel</div>
<div class="t mono " style="left:1208.6px;top:119.53px;font-size:12.29px;font-weight:700;color:#111;transform-origin:0 0;transform:scale(0.9492,1.1111);">Operation</div>
<div class="t mono " style="left:1311px;top:119.53px;font-size:12.29px;font-weight:700;color:#111;transform-origin:0 0;transform:scale(0.9492,1.1111);">Transform</div>
<div class="t mono " style="left:1450.6px;top:119.53px;font-size:12.29px;font-weight:700;color:#111;transform-origin:0 0;transform:scale(0.9492,1.1111);">Space</div>
<div class="t mono " style="left:1562.4px;top:119.53px;font-size:12.29px;font-weight:700;color:#111;transform-origin:0 0;transform:scale(0.9492,1.1111);">y Channel</div>
<div class="om" style="left:1072px;top:140px;width:151px;"></div><div class="ind" style="left:1203px;top:149px"></div><div class="t mono " style="left:1077px;top:146.53px;font-size:12.29px;font-weight:700;color:#111;transform-origin:0 0;transform:scale(0.9492,1.1111);">stdin 1</div>
<div class="om" style="left:1223px;top:140px;width:90px;"></div><div class="ind" style="left:1292px;top:149px"></div><div class="t mono " style="left:1232px;top:146.53px;font-size:12.29px;font-weight:700;color:#111;transform-origin:0 0;transform:scale(0.9492,1.1111);">none</div>
<div class="om" style="left:1313px;top:140px;width:144px;"></div><div class="ind" style="left:1436px;top:149px"></div><div class="t mono " style="left:1345px;top:146.53px;font-size:12.29px;font-weight:700;color:#111;transform-origin:0 0;transform:scale(0.9492,1.1111);">Fourier</div>
<div class="om" style="left:1457px;top:140px;width:104px;"></div><div class="ind" style="left:1541px;top:149px"></div><div class="t mono " style="left:1460px;top:146.53px;font-size:12.29px;font-weight:700;color:#111;transform-origin:0 0;transform:scale(0.9492,1.1111);">magnitude</div>
<div class="om" style="left:1561px;top:140px;width:118px;"></div><div class="ind" style="left:1657px;top:149px"></div><div class="stp"><div class="t mono " style="left:1565px;top:146.53px;font-size:12.29px;font-weight:700;color:#1c1c1c;transform-origin:0 0;transform:scale(0.9492,1.1111);"></div></div>
<div class="a" style="left:1563px;top:0;width:100px;height:700px;overflow:hidden"><div class="stp" style="left:-1563px"><div class="t mono " style="left:1556.5px;top:146.53px;font-size:12.29px;font-weight:700;color:#1c1c1c;transform-origin:0 0;transform:scale(0.9492,1.1111);">tdin 1</div></div></div>
<div class="om" style="left:1072px;top:176px;width:151px;"></div><div class="ind" style="left:1203px;top:185px"></div><div class="t mono " style="left:1126px;top:182.53px;font-size:12.29px;font-weight:700;color:#111;transform-origin:0 0;transform:scale(0.9492,1.1111);">OFF</div>
<div class="om" style="left:1223px;top:176px;width:90px;"></div><div class="ind" style="left:1292px;top:185px"></div><div class="stp"><div class="t mono " style="left:1232px;top:182.53px;font-size:12.29px;font-weight:700;color:#1c1c1c;transform-origin:0 0;transform:scale(0.9492,1.1111);">none</div></div>
<div class="om" style="left:1313px;top:176px;width:137px;"></div><div class="ind" style="left:1429px;top:185px"></div><div class="stp"><div class="t mono " style="left:1355px;top:182.53px;font-size:12.29px;font-weight:700;color:#1c1c1c;transform-origin:0 0;transform:scale(0.9492,1.1111);">OFF</div></div>
<div class="om" style="left:1450px;top:176px;width:106px;"></div><div class="ind" style="left:1534px;top:185px"></div><div class="stp"><div class="t mono " style="left:1457px;top:182.53px;font-size:12.29px;font-weight:700;color:#1c1c1c;transform-origin:0 0;transform:scale(0.9492,1.1111);">magnitude</div></div>
<div class="om" style="left:1558px;top:176px;width:121px;"></div><div class="ind" style="left:1657px;top:185px"></div><div class="stp"><div class="t mono " style="left:1563.7px;top:182.53px;font-size:12.29px;font-weight:700;color:#1c1c1c;transform-origin:0 0;transform:scale(0.9492,1.1111);">din 1</div></div>
<div class="a" style="left:1559px;top:185px;width:1px;height:2px;background:#999"></div><div class="a" style="left:1559px;top:190px;width:1px;height:2px;background:#999"></div>
<div class="om" style="left:1072px;top:212px;width:151px;"></div><div class="ind" style="left:1203px;top:221px"></div><div class="t mono " style="left:1126px;top:218.53px;font-size:12.29px;font-weight:700;color:#111;transform-origin:0 0;transform:scale(0.9492,1.1111);">OFF</div>
<div class="om" style="left:1223px;top:212px;width:90px;"></div><div class="ind" style="left:1292px;top:221px"></div><div class="stp"><div class="t mono " style="left:1232px;top:218.53px;font-size:12.29px;font-weight:700;color:#1c1c1c;transform-origin:0 0;transform:scale(0.9492,1.1111);">none</div></div>
<div class="om" style="left:1313px;top:212px;width:137px;"></div><div class="ind" style="left:1429px;top:221px"></div><div class="stp"><div class="t mono " style="left:1355px;top:218.53px;font-size:12.29px;font-weight:700;color:#1c1c1c;transform-origin:0 0;transform:scale(0.9492,1.1111);">OFF</div></div>
<div class="om" style="left:1450px;top:212px;width:106px;"></div><div class="ind" style="left:1534px;top:221px"></div><div class="stp"><div class="t mono " style="left:1457px;top:218.53px;font-size:12.29px;font-weight:700;color:#1c1c1c;transform-origin:0 0;transform:scale(0.9492,1.1111);">magnitude</div></div>
<div class="om" style="left:1558px;top:212px;width:121px;"></div><div class="ind" style="left:1657px;top:221px"></div><div class="stp"><div class="t mono " style="left:1563.7px;top:218.53px;font-size:12.29px;font-weight:700;color:#1c1c1c;transform-origin:0 0;transform:scale(0.9492,1.1111);">din 1</div></div>
<div class="a" style="left:1559px;top:221px;width:1px;height:2px;background:#999"></div><div class="a" style="left:1559px;top:226px;width:1px;height:2px;background:#999"></div>
<div class="om" style="left:1072px;top:248px;width:151px;"></div><div class="ind" style="left:1203px;top:257px"></div><div class="t mono " style="left:1126px;top:254.53px;font-size:12.29px;font-weight:700;color:#111;transform-origin:0 0;transform:scale(0.9492,1.1111);">OFF</div>
<div class="om" style="left:1223px;top:248px;width:90px;"></div><div class="ind" style="left:1292px;top:257px"></div><div class="stp"><div class="t mono " style="left:1232px;top:254.53px;font-size:12.29px;font-weight:700;color:#1c1c1c;transform-origin:0 0;transform:scale(0.9492,1.1111);">none</div></div>
<div class="om" style="left:1313px;top:248px;width:137px;"></div><div class="ind" style="left:1429px;top:257px"></div><div class="stp"><div class="t mono " style="left:1355px;top:254.53px;font-size:12.29px;font-weight:700;color:#1c1c1c;transform-origin:0 0;transform:scale(0.9492,1.1111);">OFF</div></div>
<div class="om" style="left:1450px;top:248px;width:106px;"></div><div class="ind" style="left:1534px;top:257px"></div><div class="stp"><div class="t mono " style="left:1457px;top:254.53px;font-size:12.29px;font-weight:700;color:#1c1c1c;transform-origin:0 0;transform:scale(0.9492,1.1111);">magnitude</div></div>
<div class="om" style="left:1558px;top:248px;width:121px;"></div><div class="ind" style="left:1657px;top:257px"></div><div class="stp"><div class="t mono " style="left:1563.7px;top:254.53px;font-size:12.29px;font-weight:700;color:#1c1c1c;transform-origin:0 0;transform:scale(0.9492,1.1111);">din 1</div></div>
<div class="a" style="left:1559px;top:257px;width:1px;height:2px;background:#999"></div><div class="a" style="left:1559px;top:262px;width:1px;height:2px;background:#999"></div>
<div class="om" style="left:1072px;top:284px;width:151px;"></div><div class="ind" style="left:1203px;top:293px"></div><div class="t mono " style="left:1126px;top:290.53px;font-size:12.29px;font-weight:700;color:#111;transform-origin:0 0;transform:scale(0.9492,1.1111);">OFF</div>
<div class="om" style="left:1223px;top:284px;width:90px;"></div><div class="ind" style="left:1292px;top:293px"></div><div class="stp"><div class="t mono " style="left:1232px;top:290.53px;font-size:12.29px;font-weight:700;color:#1c1c1c;transform-origin:0 0;transform:scale(0.9492,1.1111);">none</div></div>
<div class="om" style="left:1313px;top:284px;width:137px;"></div><div class="ind" style="left:1429px;top:293px"></div><div class="stp"><div class="t mono " style="left:1355px;top:290.53px;font-size:12.29px;font-weight:700;color:#1c1c1c;transform-origin:0 0;transform:scale(0.9492,1.1111);">OFF</div></div>
<div class="om" style="left:1450px;top:284px;width:106px;"></div><div class="ind" style="left:1534px;top:293px"></div><div class="stp"><div class="t mono " style="left:1457px;top:290.53px;font-size:12.29px;font-weight:700;color:#1c1c1c;transform-origin:0 0;transform:scale(0.9492,1.1111);">magnitude</div></div>
<div class="om" style="left:1558px;top:284px;width:121px;"></div><div class="ind" style="left:1657px;top:293px"></div><div class="stp"><div class="t mono " style="left:1563.7px;top:290.53px;font-size:12.29px;font-weight:700;color:#1c1c1c;transform-origin:0 0;transform:scale(0.9492,1.1111);">din 1</div></div>
<div class="a" style="left:1559px;top:293px;width:1px;height:2px;background:#999"></div><div class="a" style="left:1559px;top:298px;width:1px;height:2px;background:#999"></div>
<div class="om" style="left:1072px;top:320px;width:151px;"></div><div class="ind" style="left:1203px;top:329px"></div><div class="t mono " style="left:1126px;top:326.53px;font-size:12.29px;font-weight:700;color:#111;transform-origin:0 0;transform:scale(0.9492,1.1111);">OFF</div>
<div class="om" style="left:1223px;top:320px;width:90px;"></div><div class="ind" style="left:1292px;top:329px"></div><div class="stp"><div class="t mono " style="left:1232px;top:326.53px;font-size:12.29px;font-weight:700;color:#1c1c1c;transform-origin:0 0;transform:scale(0.9492,1.1111);">none</div></div>
<div class="om" style="left:1313px;top:320px;width:137px;"></div><div class="ind" style="left:1429px;top:329px"></div><div class="stp"><div class="t mono " style="left:1355px;top:326.53px;font-size:12.29px;font-weight:700;color:#1c1c1c;transform-origin:0 0;transform:scale(0.9492,1.1111);">OFF</div></div>
<div class="om" style="left:1450px;top:320px;width:106px;"></div><div class="ind" style="left:1534px;top:329px"></div><div class="stp"><div class="t mono " style="left:1457px;top:326.53px;font-size:12.29px;font-weight:700;color:#1c1c1c;transform-origin:0 0;transform:scale(0.9492,1.1111);">magnitude</div></div>
<div class="om" style="left:1558px;top:320px;width:121px;"></div><div class="ind" style="left:1657px;top:329px"></div><div class="stp"><div class="t mono " style="left:1563.7px;top:326.53px;font-size:12.29px;font-weight:700;color:#1c1c1c;transform-origin:0 0;transform:scale(0.9492,1.1111);">din 1</div></div>
<div class="a" style="left:1559px;top:329px;width:1px;height:2px;background:#999"></div><div class="a" style="left:1559px;top:334px;width:1px;height:2px;background:#999"></div>
<div class="om" style="left:1072px;top:356px;width:151px;"></div><div class="ind" style="left:1203px;top:365px"></div><div class="t mono " style="left:1126px;top:362.53px;font-size:12.29px;font-weight:700;color:#111;transform-origin:0 0;transform:scale(0.9492,1.1111);">OFF</div>
<div class="om" style="left:1223px;top:356px;width:90px;"></div><div class="ind" style="left:1292px;top:365px"></div><div class="stp"><div class="t mono " style="left:1232px;top:362.53px;font-size:12.29px;font-weight:700;color:#1c1c1c;transform-origin:0 0;transform:scale(0.9492,1.1111);">none</div></div>
<div class="om" style="left:1313px;top:356px;width:137px;"></div><div class="ind" style="left:1429px;top:365px"></div><div class="stp"><div class="t mono " style="left:1355px;top:362.53px;font-size:12.29px;font-weight:700;color:#1c1c1c;transform-origin:0 0;transform:scale(0.9492,1.1111);">OFF</div></div>
<div class="om" style="left:1450px;top:356px;width:106px;"></div><div class="ind" style="left:1534px;top:365px"></div><div class="stp"><div class="t mono " style="left:1457px;top:362.53px;font-size:12.29px;font-weight:700;color:#1c1c1c;transform-origin:0 0;transform:scale(0.9492,1.1111);">magnitude</div></div>
<div class="om" style="left:1558px;top:356px;width:121px;"></div><div class="ind" style="left:1657px;top:365px"></div><div class="stp"><div class="t mono " style="left:1563.7px;top:362.53px;font-size:12.29px;font-weight:700;color:#1c1c1c;transform-origin:0 0;transform:scale(0.9492,1.1111);">din 1</div></div>
<div class="a" style="left:1559px;top:365px;width:1px;height:2px;background:#999"></div><div class="a" style="left:1559px;top:370px;width:1px;height:2px;background:#999"></div>
<div class="om" style="left:1072px;top:392px;width:151px;"></div><div class="ind" style="left:1203px;top:401px"></div><div class="t mono " style="left:1126px;top:398.53px;font-size:12.29px;font-weight:700;color:#111;transform-origin:0 0;transform:scale(0.9492,1.1111);">OFF</div>
<div class="om" style="left:1223px;top:392px;width:90px;"></div><div class="ind" style="left:1292px;top:401px"></div><div class="stp"><div class="t mono " style="left:1232px;top:398.53px;font-size:12.29px;font-weight:700;color:#1c1c1c;transform-origin:0 0;transform:scale(0.9492,1.1111);">none</div></div>
<div class="om" style="left:1313px;top:392px;width:137px;"></div><div class="ind" style="left:1429px;top:401px"></div><div class="stp"><div class="t mono " style="left:1355px;top:398.53px;font-size:12.29px;font-weight:700;color:#1c1c1c;transform-origin:0 0;transform:scale(0.9492,1.1111);">OFF</div></div>
<div class="om" style="left:1450px;top:392px;width:106px;"></div><div class="ind" style="left:1534px;top:401px"></div><div class="stp"><div class="t mono " style="left:1457px;top:398.53px;font-size:12.29px;font-weight:700;color:#1c1c1c;transform-origin:0 0;transform:scale(0.9492,1.1111);">magnitude</div></div>
<div class="om" style="left:1558px;top:392px;width:121px;"></div><div class="ind" style="left:1657px;top:401px"></div><div class="stp"><div class="t mono " style="left:1563.7px;top:398.53px;font-size:12.29px;font-weight:700;color:#1c1c1c;transform-origin:0 0;transform:scale(0.9492,1.1111);">din 1</div></div>
<div class="a" style="left:1559px;top:401px;width:1px;height:2px;background:#999"></div><div class="a" style="left:1559px;top:406px;width:1px;height:2px;background:#999"></div>
<div class="om" style="left:1072px;top:428px;width:151px;"></div><div class="ind" style="left:1203px;top:437px"></div><div class="t mono " style="left:1126px;top:434.53px;font-size:12.29px;font-weight:700;color:#111;transform-origin:0 0;transform:scale(0.9492,1.1111);">OFF</div>
<div class="om" style="left:1223px;top:428px;width:90px;"></div><div class="ind" style="left:1292px;top:437px"></div><div class="stp"><div class="t mono " style="left:1232px;top:434.53px;font-size:12.29px;font-weight:700;color:#1c1c1c;transform-origin:0 0;transform:scale(0.9492,1.1111);">none</div></div>
<div class="om" style="left:1313px;top:428px;width:137px;"></div><div class="ind" style="left:1429px;top:437px"></div><div class="stp"><div class="t mono " style="left:1355px;top:434.53px;font-size:12.29px;font-weight:700;color:#1c1c1c;transform-origin:0 0;transform:scale(0.9492,1.1111);">OFF</div></div>
<div class="om" style="left:1450px;top:428px;width:106px;"></div><div class="ind" style="left:1534px;top:437px"></div><div class="stp"><div class="t mono " style="left:1457px;top:434.53px;font-size:12.29px;font-weight:700;color:#1c1c1c;transform-origin:0 0;transform:scale(0.9492,1.1111);">magnitude</div></div>
<div class="om" style="left:1558px;top:428px;width:121px;"></div><div class="ind" style="left:1657px;top:437px"></div><div class="stp"><div class="t mono " style="left:1563.7px;top:434.53px;font-size:12.29px;font-weight:700;color:#1c1c1c;transform-origin:0 0;transform:scale(0.9492,1.1111);">din 1</div></div>
<div class="a" style="left:1559px;top:437px;width:1px;height:2px;background:#999"></div><div class="a" style="left:1559px;top:442px;width:1px;height:2px;background:#999"></div>
<div class="a" style="left:1225px;top:466px;width:421px;height:178px;background:#000"></div>
<div class="a" style="left:1365px;top:466px;width:1px;height:178px;background:#e8e8e8"></div>
<div class="a" style="left:1505px;top:466px;width:1px;height:178px;background:#e8e8e8"></div>
<div class="a" style="left:1225px;top:604px;width:420px;height:1px;background:#e8e8e8"></div>
<div class="t mono " style="left:1232px;top:470.53px;font-size:12.29px;color:#eee;transform-origin:0 0;transform:scale(0.9492,1.1111);">A123</div>
<div class="t mono " style="left:1372px;top:470.53px;font-size:12.29px;color:#eee;transform-origin:0 0;transform:scale(0.9492,1.1111);">B123</div>
<div class="t mono " style="left:1512px;top:470.53px;font-size:12.29px;color:#eee;transform-origin:0 0;transform:scale(0.9492,1.1111);">C123</div>
<div class="t mono " style="left:1397px;top:530.53px;font-size:12.29px;color:#eee;transform-origin:0 0;transform:scale(0.9492,1.1111);">not enabled</div>
<div class="t mono " style="left:1537px;top:530.53px;font-size:12.29px;color:#eee;transform-origin:0 0;transform:scale(0.9492,1.1111);">not enabled</div>
<div class="a" style="left:1234px;top:489px;width:29px;height:30px;background:linear-gradient(90deg,#000 0%,#5c0088 45%,#a400f4 100%)"></div>
<div class="a" style="left:1326px;top:489px;width:29px;height:30px;background:linear-gradient(90deg,#000 0%,#5c0088 45%,#a400f4 100%)"></div>
<div class="t mono " style="left:1268px;top:497.53px;font-size:12.29px;color:#eee;transform-origin:0 0;transform:scale(0.9492,1.1111);">+</div>
<div class="t mono " style="left:1313.5px;top:497.53px;font-size:12.29px;color:#eee;transform-origin:0 0;transform:scale(0.9492,1.1111);">=</div>
<svg style="left:0;top:0" width="1680" height="700"><path d="M1225.5 613.1 L1226.5 615.2 L1227.5 613.9 L1228.5 612.1 L1229.5 612.9 L1230.5 616.1 L1231.5 616.3 L1232.5 613.9 L1233.5 614.4 L1234.5 618.9 L1235.5 619.2 L1236.5 616.9 L1237.5 616.8 L1238.5 620.2 L1239.5 621.9 L1240.5 620.8 L1241.5 618.2 L1242.5 619.4 L1243.5 621.7 L1244.5 619.7 L1245.5 618.5 L1246.5 618.2 L1247.5 621.5 L1248.5 620.0 L1249.5 619.1 L1250.5 618.7 L1251.5 619.3 L1252.5 621.7 L1253.5 619.9 L1254.5 616.7 L1255.5 619.4 L1256.5 619.7 L1257.5 619.7 L1258.5 617.5 L1259.5 617.5 L1260.5 620.0 L1261.5 621.0 L1262.5 618.0 L1263.5 617.3 L1264.5 620.6 L1265.5 621.0 L1266.5 619.9 L1267.5 617.7 L1268.5 619.5 L1269.5 622.2 L1270.5 620.9 L1271.5 619.7 L1272.5 620.5 L1273.5 622.7 L1274.5 624.7 L1275.5 621.5 L1276.5 623.5 L1277.5 625.3 L1278.5 627.5 L1279.5 624.6 L1280.5 624.5 L1281.5 625.3 L1282.5 625.8 L1283.5 625.1 L1284.5 623.1 L1285.5 624.0 L1286.5 625.2 L1287.5 623.8 L1288.5 622.4 L1289.5 621.3 L1290.5 624.4 L1291.5 624.3 L1292.5 621.5 L1293.5 621.9 L1294.5 622.9 L1295.5 624.7 L1296.5 624.1 L1297.5 622.1 L1298.5 624.4 L1299.5 626.2 L1300.5 626.2 L1301.5 624.6 L1302.5 625.8 L1303.5 629.2 L1304.5 629.1 L1305.5 629.2 L1306.5 630.3 L1307.5 632.7 L1308.5 635.0 L1309.5 634.2 L1310.5 635.1 L1311.5 636.6 L1312.5 638.9 L1313.5 637.4 L1314.5 637.0 L1315.5 638.8 L1316.5 642.0 L1317.5 642.1 L1318.5 638.8 L1319.5 640.1 L1320.5 640.6 L1321.5 642.4 L1322.5 639.1 L1323.5 638.6 L1324.5 639.8 L1325.5 642.7 L1326.5 641.2 L1327.5 638.1 L1328.5 640.0 L1329.5 641.4 L1330.5 641.2 L1331.5 639.3 L1332.5 638.6 L1333.5 642.3 L1334.5 641.3 L1335.5 639.6 L1336.5 638.1 L1337.5 639.6 L1338.5 640.8 L1339.5 639.1 L1340.5 638.5 L1341.5 639.5 L1342.5 640.1 L1343.5 638.8 L1344.5 636.9 L1345.5 637.5 L1346.5 638.2 L1347.5 638.7 L1348.5 636.3 L1349.5 636.7 L1350.5 639.5 L1351.5 640.3 L1352.5 639.2 L1353.5 638.4 L1354.5 639.1 L1355.5 641.2 L1356.5 640.0 L1357.5 638.2 L1358.5 638.9 L1359.5 640.5 L1360.5 640.4 L1361.5 638.9 L1362.5 639.3 L1363.5 640.2 L1364.5 640.7" fill="none" stroke="#a41ee6" stroke-width="1" shape-rendering="crispEdges"/></svg>
<div class="a" style="left:1065px;top:652px;width:615px;height:1px;background:#7b7b7b"></div><div class="a" style="left:1065px;top:653px;width:615px;height:1px;background:#f4f4f4"></div>
<div class="om" style="left:1419px;top:659px;width:33px;height:24px"></div>
<div class="t mono " style="left:1425.5px;top:664.53px;font-size:12.29px;font-weight:700;color:#111;transform-origin:0 0;transform:scale(0.9492,1.1111);">OK</div>
<div class="a" style="left:1061px;top:688px;width:158px;height:52px;background:linear-gradient(180deg,#4e4e4e 0,#5c5c5c 60%,#707070 100%);border-radius:7px 7px 0 0"></div><div class="a tb" style="left:1062px;top:689px;width:156px;height:27px;border-radius:6px 6px 0 0;box-shadow:inset 0 1px 0 #f4f4f4"></div><div class="a" style="left:1062px;top:716px;width:156px;height:23px;background:#000"></div><div class="dot" style="left:1073.2px;top:701px"></div><div class="a" style="left:1061px;top:689px;width:105px;height:27px;overflow:hidden;-webkit-mask-image:linear-gradient(90deg,#000 81.0%,transparent 100%);mask-image:linear-gradient(90deg,#000 81.0%,transparent 100%)"><div class="t " style="left:33px;top:5.34px;font-size:14.25px;font-weight:700;color:#3a3a3a;transform-origin:0 0;transform:scaleX(1.1273);text-shadow:0 1px 0 #f6f6f6;">primary Hz</div></div><div class="wbtn" style="left:1171.0px;top:694.0px"></div><svg style="left:1179.5px;top:702.5px" width="1" height="1"><path d="M-3.3 -1.6 L0 1.8 L3.3 -1.6" fill="none" stroke="#505050" stroke-width="1.45"/></svg><div class="wbtn" style="left:1195.0px;top:694.0px"></div><svg style="left:1203.5px;top:702.5px" width="1" height="1"><path d="M-3.2 -3.2 L3.2 3.2 M3.2 -3.2 L-3.2 3.2" fill="none" stroke="#505050" stroke-width="1.45"/></svg><div class="t mono " style="left:1114.5px;top:718.96px;font-size:18.02px;color:#b81cf6;transform-origin:0 0;transform:scale(0.9249,1.0526);">0.0000 Hz</div><div class="a" style="left:1118.1px;top:724.5px;width:2.8px;height:6px;background:#000"></div><div class="a" style="left:1138.1px;top:724.5px;width:2.8px;height:6px;background:#000"></div><div class="a" style="left:1148.1px;top:724.5px;width:2.8px;height:6px;background:#000"></div><div class="a" style="left:1158.1px;top:724.5px;width:2.8px;height:6px;background:#000"></div><div class="a" style="left:1168.1px;top:724.5px;width:2.8px;height:6px;background:#000"></div>
<div class="a" style="left:1228px;top:688px;width:158px;height:52px;background:linear-gradient(180deg,#4e4e4e 0,#5c5c5c 60%,#707070 100%);border-radius:7px 7px 0 0"></div><div class="a tb" style="left:1229px;top:689px;width:156px;height:27px;border-radius:6px 6px 0 0;box-shadow:inset 0 1px 0 #f4f4f4"></div><div class="a" style="left:1229px;top:716px;width:156px;height:23px;background:#000"></div><div class="dot" style="left:1240.4px;top:701px"></div><div class="a" style="left:1228px;top:689px;width:158px;height:27px"><div class="t " style="left:38px;top:5.34px;font-size:14.25px;font-weight:700;color:#a3a3a3;transform-origin:0 0;transform:scaleX(1.1168);text-shadow:0 1px 0 #f6f6f6;">delta Hz</div></div><div class="wbtn" style="left:1338.0px;top:694.0px"></div><svg style="left:1346.5px;top:702.5px" width="1" height="1"><path d="M-3.3 -1.6 L0 1.8 L3.3 -1.6" fill="none" stroke="#505050" stroke-width="1.45"/></svg><div class="wbtn" style="left:1362.0px;top:694.0px"></div><svg style="left:1370.5px;top:702.5px" width="1" height="1"><path d="M-3.2 -3.2 L3.2 3.2 M3.2 -3.2 L-3.2 3.2" fill="none" stroke="#505050" stroke-width="1.45"/></svg><div class="t mono " style="left:1262px;top:718.96px;font-size:18.02px;color:#b81cf6;transform-origin:0 0;transform:scale(0.9249,1.0526);">239.0114 Hz</div><div class="a" style="left:1305.6px;top:724.5px;width:2.8px;height:6px;background:#000"></div>
<div class="a" style="left:1389px;top:688px;width:158px;height:52px;background:linear-gradient(180deg,#4e4e4e 0,#5c5c5c 60%,#707070 100%);border-radius:7px 7px 0 0"></div><div class="a tb" style="left:1390px;top:689px;width:156px;height:27px;border-radius:6px 6px 0 0;box-shadow:inset 0 1px 0 #f4f4f4"></div><div class="a" style="left:1390px;top:716px;width:156px;height:23px;background:#000"></div><div class="dot" style="left:1401.5px;top:701px"></div><div class="a" style="left:1389px;top:689px;width:105px;height:27px;overflow:hidden;-webkit-mask-image:linear-gradient(90deg,#000 81.0%,transparent 100%);mask-image:linear-gradient(90deg,#000 81.0%,transparent 100%)"><div class="t " style="left:34px;top:5.34px;font-size:14.25px;font-weight:700;color:#a3a3a3;transform-origin:0 0;transform:scaleX(1.1227);text-shadow:0 1px 0 #f6f6f6;">secondary Hz</div></div><div class="wbtn" style="left:1499.0px;top:694.0px"></div><svg style="left:1507.5px;top:702.5px" width="1" height="1"><path d="M-3.3 -1.6 L0 1.8 L3.3 -1.6" fill="none" stroke="#505050" stroke-width="1.45"/></svg><div class="wbtn" style="left:1523.0px;top:694.0px"></div><svg style="left:1531.5px;top:702.5px" width="1" height="1"><path d="M-3.2 -3.2 L3.2 3.2 M3.2 -3.2 L-3.2 3.2" fill="none" stroke="#505050" stroke-width="1.45"/></svg><div class="t mono " style="left:1422.5px;top:718.96px;font-size:18.02px;color:#b81cf6;transform-origin:0 0;transform:scale(0.9249,1.0526);">239.0114 Hz</div><div class="a" style="left:1466.1px;top:724.5px;width:2.8px;height:6px;background:#000"></div>
<div class="a" style="left:0;top:1025px;width:1049px;height:1px;background:#3a3a3a"></div>
<div class="a" style="left:0;top:1026px;width:1680px;height:24px;background:#d3d4d0"></div>
<div class="a" style="left:41px;top:1026px;width:1499px;height:24px;background:linear-gradient(180deg,#e0e0e0,#dadada)"></div>
<div class="a" style="left:1509px;top:1026px;width:1px;height:24px;background:#c6c6c6"></div>
<svg style="left:3px;top:1026px" width="30" height="24" viewBox="0 0 30 24">
<circle cx="17" cy="12" r="9.1" fill="none" stroke="#6b8d3c" stroke-width="2.6"/>
<circle cx="17" cy="12" r="9.1" fill="none" stroke="#a9c77a" stroke-width="1" stroke-dasharray="2 2"/>
<path d="M13.2 7.4 A5.6 5.6 0 1 1 13.2 16.6" fill="none" stroke="#6b8d3c" stroke-width="2.2"/>
<path d="M5 5.6 L16 12 L5 18.4 Z" fill="#8db454" stroke="#5f8233" stroke-width="1"/>
<path d="M21 7.4 L24.4 1.2 L27.8 7.4 Z" fill="#3a3a3a"/>
</svg>
<div class="a" style="left:34px;top:1033px;width:4px;height:1px;background:#c4c4c0;box-shadow:0 3px 0 #c4c4c0,0 6px 0 #c4c4c0"></div>
<div class="a" style="left:879px;top:1026px;width:209px;height:24px;background:linear-gradient(180deg,#7b9066,#6d8359 50%,#647a50);box-shadow:inset 1px 0 0 #8a9e76,inset -1px 0 0 #5a6e48,inset 0 1px 0 #869a72"></div>
<svg style="left:49px;top:1030px" width="17" height="17" viewBox="0 0 17 17"><circle cx="8.3" cy="8.3" r="7.4" fill="#e89090"/><circle cx="8.3" cy="8.3" r="7.4" fill="url(#op)" opacity=".3"/><ellipse cx="8.3" cy="8.3" rx="2.7" ry="5.4" fill="none" stroke="#f4eaea" stroke-width="2.2"/></svg>
<svg style="left:257px;top:1030px" width="18" height="16" viewBox="0 0 18 16"><rect x="1.5" y="1.5" width="14" height="9" fill="#a4a4a4" stroke="#b8b8b8" stroke-width="1"/><path d="M2 2 H15 L2 8Z" fill="#b2b2b2"/><rect x="6" y="11" width="5" height="1.6" fill="#cfcfcf"/><ellipse cx="8.5" cy="13.6" rx="4.8" ry="1.1" fill="#e6e6e6"/></svg>
<svg style="left:468px;top:1030px" width="16" height="16" viewBox="0 0 16 16"><rect width="16" height="9.4" rx="1.4" fill="#b400f4"/><path d="M1.4 0 H14.6 L13 1.6 H1.6 V7.8 L0 9.4 V1.4 Q0 0 1.4 0Z" fill="#00eca6"/><rect x="1.6" y="1.6" width="12.6" height="6.2" fill="#000"/><rect x="2.4" y="2.2" width="4.8" height="5" fill="#5a0082"/><path d="M3.4 7.2 L7.2 5.4 V7.2Z" fill="#007a5a"/><rect x="9" y="2.2" width="4.6" height="5" fill="#007a5a"/><path d="M9 2.2 H12.6 L9 4.6Z" fill="#5a0082"/><rect x="7.1" y="2" width="1.9" height="5.4" fill="#00e09c"/><rect y="8.8" width="16" height="7.2" rx="1.4" fill="#00eca6"/><path d="M1.4 8.8 H16 L14.4 10.4 H1.6 V14.4 L0 16 V10.2 Q0 8.8 1.4 8.8Z" fill="#b400f4"/><rect x="1.6" y="10.4" width="12.8" height="4" fill="#000"/><path d="M2.6 11.6 h3.4 M9.4 11.6 h3.6" stroke="#33302c" stroke-width="1.4"/><path d="M2.8 13.5 h10.4" stroke="#007a5a" stroke-width="1"/><rect x="7.2" y="10.8" width="1.6" height="3.4" fill="#00a070"/></svg>
<svg style="left:678px;top:1030px" width="16" height="16" viewBox="0 0 16 16"><rect width="16" height="16" rx="1.6" fill="#b400f4"/><path d="M1.6 0 H14.4 L16 1.6 L14.4 1.6 H1.6 V14.4 L1.6 16 L0 14.4 V1.6 Q0 0 1.6 0 Z" fill="#00eca6"/><rect x="1.6" y="1.6" width="12.8" height="12.8" fill="#000"/><g stroke-width="1.25" fill="none" stroke-linecap="round"><path d="M4 4.3 L12.4 4.3 M4 4.3 L12.4 8 M4 4.3 L12.4 11.7" stroke="#ff1010"/><path d="M4 11.7 L12.4 4.3 M4 11.7 L12.4 8 M4 11.7 L12.4 11.7" stroke="#1010ff"/><path d="M4 8 L12.4 4.3 M4 8 L12.4 8 M4 8 L12.4 11.7" stroke="#10e020"/><path d="M4.2 4.3 H9 M4.2 5.2 H7" stroke="#ff1010" stroke-width="1.6"/><path d="M4.2 11.7 H9 M4.2 10.8 H7" stroke="#1010ff" stroke-width="1.6"/></g><circle cx="3.4" cy="4.3" r="1.1" fill="#b400f4"/><circle cx="3.4" cy="8" r="1.1" fill="#b400f4"/><circle cx="3.4" cy="11.7" r="1.1" fill="#b400f4"/><circle cx="12.9" cy="4.3" r="1.1" fill="#00eca6"/><circle cx="12.9" cy="8" r="1.1" fill="#00eca6"/><circle cx="12.9" cy="11.7" r="1.1" fill="#00eca6"/></svg>
<svg style="left:888px;top:1031px" width="16" height="16" viewBox="0 0 16 16"><rect width="16" height="16" rx="1.6" fill="#b400f4"/><path d="M1.6 0 H14.4 L16 1.6 L14.4 1.6 H1.6 V14.4 L1.6 16 L0 14.4 V1.6 Q0 0 1.6 0 Z" fill="#00eca6"/><rect x="1.6" y="1.6" width="12.8" height="12.8" fill="#000"/><path d="M7.4 12.4 Q8 3.2 8.4 3.2 Q8.9 3.2 9.4 12.4 Z" fill="#00eca6" stroke="#00eca6" stroke-width=".7"/><rect x="2.7" y="12.1" width="10.6" height="1.1" fill="#00eca6"/></svg>
<svg style="left:1097px;top:1030px" width="16" height="16" viewBox="0 0 16 16"><rect width="16" height="16" rx="1.6" fill="#b400f4"/><path d="M1.6 0 H14.4 L16 1.6 L14.4 1.6 H1.6 V14.4 L1.6 16 L0 14.4 V1.6 Q0 0 1.6 0 Z" fill="#00eca6"/><rect x="1.6" y="1.6" width="12.8" height="12.8" fill="#000"/><path d="M7.4 12.4 Q8 3.2 8.4 3.2 Q8.9 3.2 9.4 12.4 Z" fill="#00eca6" stroke="#00eca6" stroke-width=".7"/><rect x="2.7" y="12.1" width="10.6" height="1.1" fill="#00eca6"/></svg>
<svg style="left:1306px;top:1030px" width="16" height="16" viewBox="0 0 16 16"><rect width="16" height="16" rx="1.6" fill="#b400f4"/><path d="M1.6 0 H14.4 L16 1.6 L14.4 1.6 H1.6 V14.4 L1.6 16 L0 14.4 V1.6 Q0 0 1.6 0 Z" fill="#00eca6"/><rect x="1.6" y="1.6" width="12.8" height="12.8" fill="#000"/><path d="M8 3.8 L12 12 H4 Z" fill="none" stroke="#00eca6" stroke-width="1.5"/></svg>
<div class="t " style="left:73px;top:1031.29px;font-size:13.13px;color:#2c2c2c;transform-origin:0 0;transform:scaleX(1.1105);">[Преобразование Фурь...</div>
<div class="t " style="left:282px;top:1031.29px;font-size:13.13px;color:#2c2c2c;transform-origin:0 0;transform:scaleX(1.0976);">[andrey@andrey-PC: ~/...</div>
<div class="t " style="left:492px;top:1031.29px;font-size:13.13px;color:#2c2c2c;transform-origin:0 0;transform:scaleX(1.0878);">baudline</div>
<div class="t " style="left:702px;top:1031.29px;font-size:13.13px;color:#2c2c2c;transform-origin:0 0;transform:scaleX(1.1155);">input mapping</div>
<div class="t " style="left:912px;top:1032.29px;font-size:13.13px;color:#3e4438;transform-origin:0 0;transform:scaleX(1.0874);">primary Hz</div>
<div class="t " style="left:1122px;top:1031.29px;font-size:13.13px;color:#2c2c2c;transform-origin:0 0;transform:scaleX(1.0715);">secondary Hz</div>
<div class="t " style="left:1332px;top:1031.29px;font-size:13.13px;color:#2c2c2c;transform-origin:0 0;transform:scaleX(1.0797);">delta Hz</div>
<div class="a" style="left:1596px;top:1028px;width:39px;height:20px;background:#e4e4e2;border:1px solid #c9c9c6"></div>
<div class="a" style="left:1598px;top:1029px;width:36px;height:18px;background:#000"></div>
<div class="a" style="left:1598px;top:1039px;width:36px;height:4px;background:#0a8de4"></div>
<div class="a" style="left:1598px;top:1043px;width:36px;height:4px;background:#0a69a8"></div>
<div class="a" style="left:1632px;top:1031px;width:2px;height:9px;background:#0a8de4"></div>
<div class="a" style="left:1638px;top:1028px;width:39px;height:20px;background:#e4e4e2;border:1px solid #c9c9c6"></div>
<div class="a" style="left:1640px;top:1029px;width:36px;height:18px;background:#00b258"></div>
<div class="a" style="left:1640px;top:1029px;width:36px;height:3px;background:#000"></div>
<div class="a" style="left:1640px;top:1032px;width:36px;height:5px;background:#aaf6cf"></div>
<svg style="left:1149px;top:737px" width="16" height="20" viewBox="0 0 16 20"><path d="M1.6 2.2 L1.6 17 L4.6 13.7 L7.1 17.6 L9.4 16.8 L7.4 12 L12.4 11.6 Z" fill="#fafafa" stroke="#000" stroke-width="1.15" stroke-linejoin="miter"/></svg>
</body></html>
